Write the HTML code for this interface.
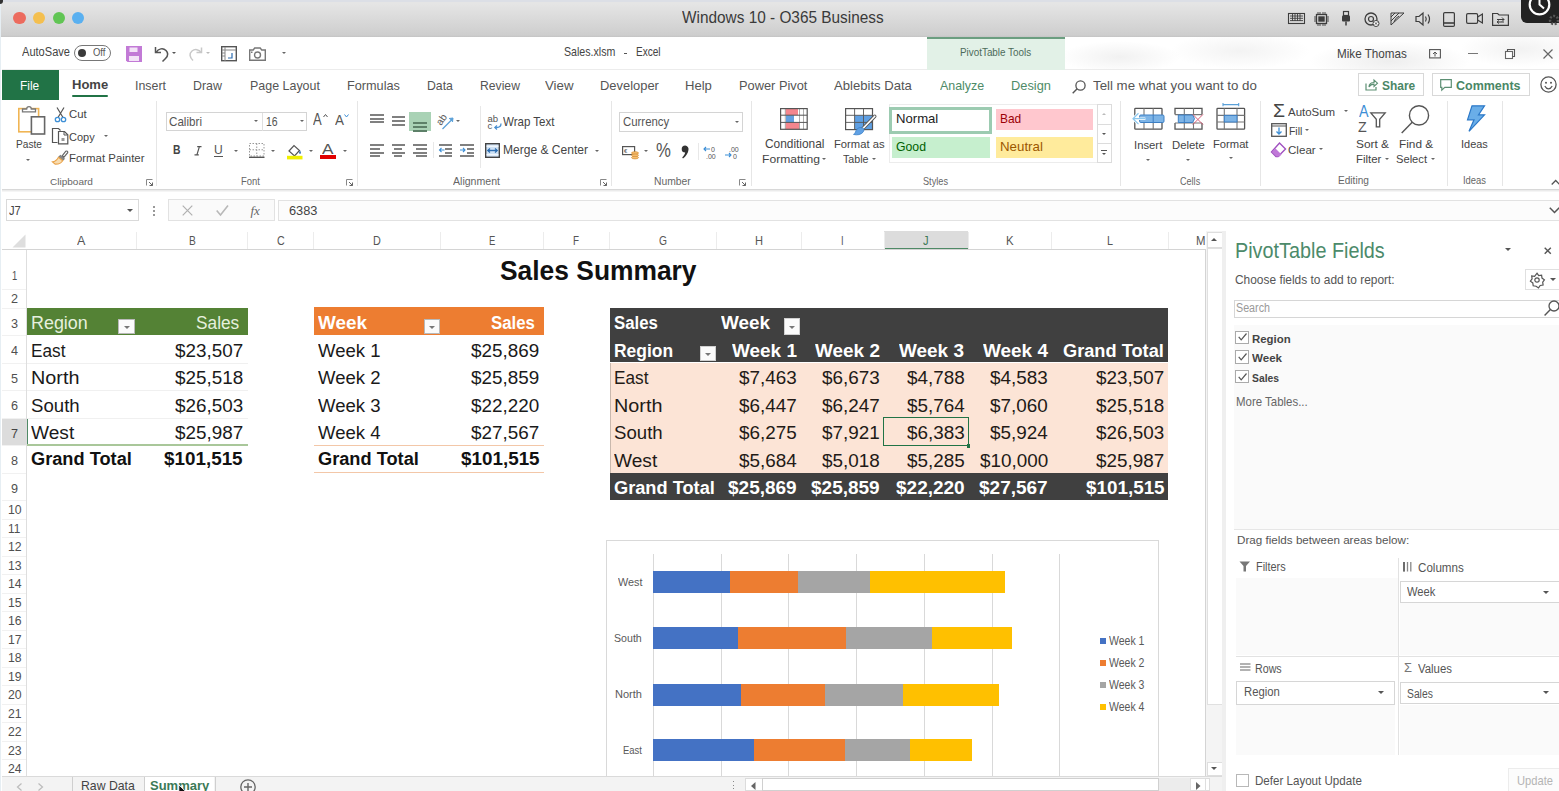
<!DOCTYPE html>
<html><head><meta charset="utf-8"><title>Excel</title>
<style>
html,body{margin:0;padding:0;overflow:hidden;width:1559px;height:791px;}
#root{position:relative;width:1559px;height:791px;overflow:hidden;background:#fff;}
body{width:1559px;height:791px;overflow:hidden;position:relative;background:#fff;font-family:"Liberation Sans",sans-serif;}
.t{position:absolute;white-space:nowrap;line-height:1;transform-origin:0 0;font-family:"Liberation Sans",sans-serif;}
svg{overflow:visible}
</style></head><body><div id="root">
<div style="position:absolute;left:0.0px;top:0.0px;width:1559.0px;height:36.5px;background:linear-gradient(#e5e5e5 10%,#cecece 95%,#c4c4c4);"></div>
<div style="position:absolute;left:0.0px;top:0.0px;width:1559.0px;height:1.5px;background:#dcdfe6;"></div>
<div style="position:absolute;left:0.0px;top:0.0px;width:1.2px;height:791.0px;background:#e6eef3;"></div>
<div style="position:absolute;left:0;top:0;width:3px;height:4px;background:#333;border-radius:0 0 3px 0"></div>
<div style="position:absolute;left:13.3px;top:11.6px;width:12.4px;height:12.4px;border-radius:50%;background:#ec6b5e"></div>
<div style="position:absolute;left:33.0px;top:11.6px;width:12.4px;height:12.4px;border-radius:50%;background:#f4bf4f"></div>
<div style="position:absolute;left:52.5px;top:11.6px;width:12.4px;height:12.4px;border-radius:50%;background:#61c554"></div>
<div style="position:absolute;left:72.0px;top:11.6px;width:12.4px;height:12.4px;border-radius:50%;background:#5ab0f0"></div>
<div class="t" style="left:681.50px;top:9.14px;font-size:16.29px;font-weight:400;color:#3a3a3a;transform:scaleX(0.9443);">Windows 10 - O365 Business</div>
<svg style="position:absolute;left:1288px;top:13px;" width="17" height="11" viewBox="0 0 17 11"><rect x="0.5" y="0.5" width="16" height="10" fill="none" stroke="#3d3d3d" stroke-width="1.1"/><path d="M2 3h13M2 5.3h13M2 7.6h13M4.5 1v7M7 1v7M9.5 1v7M12 1v7" stroke="#3d3d3d" stroke-width="0.9"/></svg>
<svg style="position:absolute;left:1313.5px;top:12px;" width="15" height="14" viewBox="0 0 15 14"><rect x="2.5" y="2.5" width="10" height="9" fill="none" stroke="#3d3d3d" stroke-width="1.3"/><rect x="4.3" y="4.3" width="6.4" height="5.4" fill="#3d3d3d"/><path d="M4 0v2M6 0v2M9 0v2M11 0v2M4 12v2M6 12v2M9 12v2M11 12v2M0 5h2M0 7h2M0 9h2M13 5h2M13 7h2M13 9h2" stroke="#3d3d3d" stroke-width="0.9"/></svg>
<svg style="position:absolute;left:1341px;top:11px;" width="10" height="15" viewBox="0 0 10 15"><rect x="2.5" y="0.5" width="5" height="4" fill="none" stroke="#3d3d3d" stroke-width="1.2"/><rect x="1" y="4.5" width="8" height="6" rx="1" fill="#3d3d3d"/><path d="M5 10.5v4" stroke="#3d3d3d" stroke-width="1.5"/></svg>
<svg style="position:absolute;left:1364px;top:12px;" width="16" height="15" viewBox="0 0 16 15"><circle cx="7" cy="7" r="6" fill="none" stroke="#3d3d3d" stroke-width="1.3"/><circle cx="7" cy="7" r="2.5" fill="none" stroke="#3d3d3d" stroke-width="1.2"/><circle cx="12" cy="11.5" r="3" fill="#fff" stroke="#3d3d3d" stroke-width="1"/><path d="M10.8 10.3l2.4 2.4M13.2 10.3l-2.4 2.4" stroke="#3d3d3d" stroke-width="0.9"/></svg>
<svg style="position:absolute;left:1390px;top:12px;" width="15" height="14" viewBox="0 0 15 14"><path d="M1 1v12M1 1h13M1 13l13-12M1 5l4-4M1 9l8-8M4 10q1-4 5-6" stroke="#3d3d3d" stroke-width="1" fill="none"/></svg>
<svg style="position:absolute;left:1414.5px;top:12px;" width="17" height="14" viewBox="0 0 17 14"><path d="M1 4.5h3l4-3.5v12l-4-3.5h-3z" fill="none" stroke="#3d3d3d" stroke-width="1.2"/><path d="M10.5 4.5q1.5 2.5 0 5M13 2.5q3 4.5 0 9" fill="none" stroke="#3d3d3d" stroke-width="1.2"/></svg>
<svg style="position:absolute;left:1442.5px;top:11.5px;" width="12" height="15" viewBox="0 0 12 15"><rect x="0.6" y="0.6" width="10.8" height="13.8" rx="1.2" fill="none" stroke="#3d3d3d" stroke-width="1.2"/><path d="M1 11h10" stroke="#3d3d3d" stroke-width="1.6"/></svg>
<svg style="position:absolute;left:1466px;top:13px;" width="17" height="11" viewBox="0 0 17 11"><rect x="0.6" y="0.6" width="11" height="9.8" rx="1.3" fill="none" stroke="#3d3d3d" stroke-width="1.2"/><path d="M11.6 4l4.8-3v9l-4.8-3" fill="none" stroke="#3d3d3d" stroke-width="1.2"/></svg>
<svg style="position:absolute;left:1491.5px;top:12px;" width="17" height="14" viewBox="0 0 17 14"><path d="M0.6 1.5h5l1.5 1.5h9.3v10.4h-15.8z" fill="none" stroke="#3d3d3d" stroke-width="1.2"/><path d="M5 7.5h7M10 5.5l2 2-2 2M12 10h-7M7 8.5l-2 1.5 2 1.5" fill="none" stroke="#3d3d3d" stroke-width="1"/></svg>
<div style="position:absolute;left:1520.6px;top:-8px;width:48px;height:31px;border-radius:6px;background:#222"></div>
<svg style="position:absolute;left:1528px;top:-7px;" width="24" height="24" viewBox="0 0 24 24"><circle cx="11.5" cy="11.5" r="9.8" fill="none" stroke="#fff" stroke-width="2.2"/><path d="M11.5 4.5v7l4.5 4" fill="none" stroke="#fff" stroke-width="2"/></svg>
<svg style="position:absolute;left:1546px;top:13px;" width="14" height="13" viewBox="0 0 14 13"><circle cx="8" cy="7" r="4" fill="none" stroke="#555" stroke-width="2.5" stroke-dasharray="2 1.5"/></svg>
<div style="position:absolute;left:1.5px;top:36.5px;width:1557.5px;height:33.0px;background:#ffffff;"></div>
<div style="position:absolute;left:1060px;top:36.5px;width:499px;height:33px;background:radial-gradient(ellipse 60px 16px at 60px 20px,#f1f1f1,transparent),radial-gradient(ellipse 70px 18px at 180px 14px,#f3f3f3,transparent),radial-gradient(ellipse 80px 20px at 330px 24px,#eeeeee,transparent),radial-gradient(ellipse 60px 18px at 460px 12px,#f2f2f2,transparent)"></div>
<div style="position:absolute;left:1.5px;top:69.0px;width:1557.5px;height:1.0px;background:#ececec;"></div>
<div class="t" style="left:22.00px;top:47.28px;font-size:11.86px;font-weight:400;color:#444;transform:scaleX(0.9338);">AutoSave</div>
<div style="position:absolute;box-sizing:border-box;left:74.4px;top:44.5px;width:36.6px;height:16px;border:1.2px solid #777;border-radius:8px;background:#fff"></div>
<div style="position:absolute;left:78.2px;top:48.6px;width:8px;height:8px;border-radius:50%;background:#3a3a3a"></div>
<div class="t" style="left:93.00px;top:47.85px;font-size:10.00px;font-weight:400;color:#555;transform:scaleX(0.9470);">Off</div>
<svg style="position:absolute;left:126px;top:46px;" width="16" height="16" viewBox="0 0 16 16"><path d="M0 0h16v16h-14.5l-1.5-1.5z" fill="#c27ad6"/><rect x="3.5" y="1.5" width="8" height="4.5" fill="#f3e3f7"/><rect x="3" y="10" width="10" height="5" fill="#f3e3f7"/></svg>
<svg style="position:absolute;left:154px;top:45.5px;" width="15" height="16" viewBox="0 0 15 16"><path d="M1.5 1v5.5h5.5" fill="none" stroke="#555" stroke-width="1.5"/><path d="M2 6.5c2.5-4 7-5 10-2 2.5 2.5 2 5.5-.5 8l-3 3" fill="none" stroke="#555" stroke-width="1.5"/></svg>
<div style="position:absolute;left:172.0px;top:51.8px;width:0;height:0;border-left:2.5px solid transparent;border-right:2.5px solid transparent;border-top:2.5px solid #555"></div>
<svg style="position:absolute;left:188px;top:45.5px;" width="15" height="16" viewBox="0 0 15 16"><path d="M13.5 1.5v5h-5" fill="none" stroke="#c8c8c8" stroke-width="1.5"/><path d="M13 6.5c-2-3-6-4-9-1.5-3 2.5-2.5 6 1 9.5" fill="none" stroke="#c8c8c8" stroke-width="1.5"/></svg>
<div style="position:absolute;left:206.0px;top:51.8px;width:0;height:0;border-left:2.5px solid transparent;border-right:2.5px solid transparent;border-top:2.5px solid #bbb"></div>
<svg style="position:absolute;left:221px;top:46px;" width="16" height="15.5" viewBox="0 0 16 15.5"><rect x="0.7" y="0.7" width="14.6" height="14" fill="#fff" stroke="#555" stroke-width="1.4"/><path d="M1 4h14M4 1v14M1 7h3M1 10h3" stroke="#888" stroke-width="1"/><path d="M11 7v5h-4" fill="none" stroke="#2b6cb0" stroke-width="1.2"/></svg>
<svg style="position:absolute;left:248.5px;top:46.5px;" width="17" height="14" viewBox="0 0 17 14"><path d="M0.7 3h3.5l1.5-2h5.5l1.5 2h3.6v10.3h-15.6z" fill="none" stroke="#777" stroke-width="1.4"/><circle cx="8.5" cy="8" r="3" fill="none" stroke="#777" stroke-width="1.4"/><rect x="2" y="4.5" width="1.5" height="1.5" fill="#777"/></svg>
<div style="position:absolute;left:282.1px;top:51.8px;width:0;height:0;border-left:2.5px solid transparent;border-right:2.5px solid transparent;border-top:2.5px solid #666"></div>
<div class="t" style="left:564.10px;top:46.14px;font-size:12.86px;font-weight:400;color:#444;transform:scaleX(0.8268);">Sales.xlsm</div>
<div style="position:absolute;left:623.7px;top:52.6px;width:3.6px;height:1.2px;background:#555;"></div>
<div class="t" style="left:635.50px;top:46.14px;font-size:12.86px;font-weight:400;color:#444;transform:scaleX(0.7825);">Excel</div>
<div style="position:absolute;left:927.0px;top:36.5px;width:137.5px;height:33.0px;background:#e2f1e7;"></div>
<div style="position:absolute;left:927.0px;top:36.5px;width:137.5px;height:2.0px;background:#6b9e80;"></div>
<div class="t" style="left:959.60px;top:47.51px;font-size:10.29px;font-weight:400;color:#4d6b5a;transform:scaleX(0.9601);">PivotTable Tools</div>
<div class="t" style="left:1336.70px;top:47.54px;font-size:12.86px;font-weight:400;color:#444;transform:scaleX(0.9084);">Mike Thomas</div>
<svg style="position:absolute;left:1429px;top:49px;" width="12" height="9.5" viewBox="0 0 12 9.5"><rect x="0.6" y="0.6" width="10.8" height="8.3" fill="none" stroke="#555" stroke-width="1.1"/><path d="M6 7.5v-4.5M4 5l2-2 2 2" fill="none" stroke="#555" stroke-width="1"/></svg>
<div style="position:absolute;left:1468.0px;top:52.7px;width:9.5px;height:1.2px;background:#777;"></div>
<svg style="position:absolute;left:1505px;top:48.5px;" width="10" height="10" viewBox="0 0 10 10"><rect x="0.5" y="2.5" width="7" height="7" fill="#fff" stroke="#666" stroke-width="1.1"/><path d="M2.5 2.5v-2h7v7h-2" fill="none" stroke="#555" stroke-width="1.1"/></svg>
<svg style="position:absolute;left:1542.7px;top:48.5px;" width="10" height="10" viewBox="0 0 10 10"><path d="M0.5 0.5l9 9M9.5 0.5l-9 9" stroke="#666" stroke-width="1.2"/></svg>
<div style="position:absolute;left:1.5px;top:70.0px;width:57.2px;height:29.5px;background:#217346;"></div>
<div class="t" style="left:20.00px;top:78.69px;font-size:13.14px;font-weight:400;color:#fff;transform:scaleX(0.9074);">File</div>
<div class="t" style="left:71.60px;top:79.00px;font-size:12.78px;font-weight:700;color:#444;transform:scaleX(1.0191);">Home</div>
<div style="position:absolute;left:71.6px;top:94.6px;width:36.2px;height:2.4px;background:#217346;border-radius:1px"></div>
<div class="t" style="left:134.50px;top:78.69px;font-size:13.14px;font-weight:400;color:#555;transform:scaleX(0.9435);">Insert</div>
<div class="t" style="left:193.00px;top:78.69px;font-size:13.14px;font-weight:400;color:#555;transform:scaleX(0.9450);">Draw</div>
<div class="t" style="left:249.60px;top:78.69px;font-size:13.14px;font-weight:400;color:#555;transform:scaleX(0.9485);">Page Layout</div>
<div class="t" style="left:347.00px;top:78.69px;font-size:13.14px;font-weight:400;color:#555;transform:scaleX(0.9671);">Formulas</div>
<div class="t" style="left:427.00px;top:78.69px;font-size:13.14px;font-weight:400;color:#555;transform:scaleX(0.9353);">Data</div>
<div class="t" style="left:480.00px;top:78.69px;font-size:13.14px;font-weight:400;color:#555;transform:scaleX(0.9279);">Review</div>
<div class="t" style="left:545.00px;top:78.69px;font-size:13.14px;font-weight:400;color:#555;transform:scaleX(1.0121);">View</div>
<div class="t" style="left:600.00px;top:78.69px;font-size:13.14px;font-weight:400;color:#555;transform:scaleX(0.9845);">Developer</div>
<div class="t" style="left:684.60px;top:78.69px;font-size:13.14px;font-weight:400;color:#555;transform:scaleX(0.9960);">Help</div>
<div class="t" style="left:738.50px;top:78.69px;font-size:13.14px;font-weight:400;color:#555;transform:scaleX(0.9769);">Power Pivot</div>
<div class="t" style="left:834.00px;top:78.69px;font-size:13.14px;font-weight:400;color:#555;transform:scaleX(0.9974);">Ablebits Data</div>
<div class="t" style="left:940.00px;top:78.69px;font-size:13.14px;font-weight:400;color:#4e8b68;transform:scaleX(0.9468);">Analyze</div>
<div class="t" style="left:1011.00px;top:78.69px;font-size:13.14px;font-weight:400;color:#4e8b68;transform:scaleX(0.9770);">Design</div>
<svg style="position:absolute;left:1072px;top:79.5px;" width="14" height="13.5" viewBox="0 0 14 13.5"><circle cx="8.5" cy="5.5" r="4.6" fill="none" stroke="#555" stroke-width="1.3"/><path d="M5.2 8.8l-4.5 4.5" stroke="#555" stroke-width="1.4"/></svg>
<div class="t" style="left:1093.40px;top:78.69px;font-size:13.14px;font-weight:400;color:#555;transform:scaleX(1.0118);">Tell me what you want to do</div>
<div style="position:absolute;box-sizing:border-box;left:1357.6px;top:73.3px;width:66.2px;height:22.5px;border:1px solid #d8d8d8;background:#fff;"></div>
<svg style="position:absolute;left:1365px;top:79px;" width="13" height="12" viewBox="0 0 13 12"><path d="M1 4.5v6.5h10v-3" fill="none" stroke="#5c8f73" stroke-width="1.2"/><path d="M4 8c0-3 2-4.5 5-4.5v-2.5l3.5 3.2-3.5 3.2v-2.3c-2 0-4 1-5 2.9z" fill="none" stroke="#5c8f73" stroke-width="1.1"/></svg>
<div class="t" style="left:1381.70px;top:78.57px;font-size:13.06px;font-weight:700;color:#4a8766;transform:scaleX(0.9147);">Share</div>
<div style="position:absolute;box-sizing:border-box;left:1432.0px;top:73.3px;width:97.6px;height:22.5px;border:1px solid #d8d8d8;background:#fff;"></div>
<svg style="position:absolute;left:1440.4px;top:79px;" width="12" height="12" viewBox="0 0 12 12"><path d="M0.7 0.7h10.6v7.6h-6.5l-3 2.8v-2.8h-1.1z" fill="none" stroke="#5c8f73" stroke-width="1.2"/></svg>
<div class="t" style="left:1455.60px;top:78.57px;font-size:13.06px;font-weight:700;color:#4a8766;transform:scaleX(0.9571);">Comments</div>
<svg style="position:absolute;left:1539.8px;top:76px;" width="17" height="17" viewBox="0 0 17 17"><circle cx="8.5" cy="8.5" r="7.6" fill="none" stroke="#555" stroke-width="1.3"/><circle cx="6" cy="6.8" r="1" fill="#555"/><circle cx="11" cy="6.8" r="1" fill="#555"/><path d="M4.8 10c1 2 2.2 2.8 3.7 2.8s2.7-.8 3.7-2.8" fill="none" stroke="#555" stroke-width="1.2"/></svg>
<div style="position:absolute;left:156.4px;top:101.0px;width:1.0px;height:85.0px;background:#e6e6e6;"></div>
<div style="position:absolute;left:357.0px;top:101.0px;width:1.0px;height:85.0px;background:#e6e6e6;"></div>
<div style="position:absolute;left:610.8px;top:101.0px;width:1.0px;height:85.0px;background:#e6e6e6;"></div>
<div style="position:absolute;left:750.5px;top:101.0px;width:1.0px;height:85.0px;background:#e6e6e6;"></div>
<div style="position:absolute;left:1119.6px;top:101.0px;width:1.0px;height:85.0px;background:#e6e6e6;"></div>
<div style="position:absolute;left:1260.3px;top:101.0px;width:1.0px;height:85.0px;background:#e6e6e6;"></div>
<div style="position:absolute;left:1446.8px;top:101.0px;width:1.0px;height:85.0px;background:#e6e6e6;"></div>
<div style="position:absolute;left:1501.8px;top:101.0px;width:1.0px;height:85.0px;background:#e6e6e6;"></div>
<div style="position:absolute;left:1.5px;top:188.5px;width:1557.5px;height:1.0px;background:#d8d8d8;"></div>
<div style="position:absolute;left:1.5px;top:189.5px;width:1557.5px;height:2.5px;background:linear-gradient(#e6e6e6,#fafafa);"></div>
<svg style="position:absolute;left:17.8px;top:105.4px;" width="28" height="30" viewBox="0 0 28 30"><rect x="0.8" y="3.6" width="19.8" height="23.2" fill="#fff" stroke="#f0b554" stroke-width="1.6"/><path d="M4.5 6.8v-2.8h4.2a2.3 2.3 0 0 1 4.6 0h4.2v2.8z" fill="#fff" stroke="#777" stroke-width="1.3"/><rect x="13.4" y="11.8" width="13.2" height="17.2" fill="#fff" stroke="#666" stroke-width="1.6"/></svg>
<div class="t" style="left:15.70px;top:139.36px;font-size:11.29px;font-weight:400;color:#444;transform:scaleX(0.9017);">Paste</div>
<div style="position:absolute;left:26.3px;top:158.8px;width:0;height:0;border-left:2.5px solid transparent;border-right:2.5px solid transparent;border-top:2.5px solid #666"></div>
<svg style="position:absolute;left:54.6px;top:107px;" width="11" height="15.5" viewBox="0 0 11 15.5"><path d="M2 0.5l6 10M9 0.5l-6 10" stroke="#555" stroke-width="1.2"/><circle cx="2.5" cy="12.5" r="2.2" fill="none" stroke="#3d8fd6" stroke-width="1.3"/><circle cx="8.5" cy="12.5" r="2.2" fill="none" stroke="#3d8fd6" stroke-width="1.3"/></svg>
<div class="t" style="left:69.30px;top:109.24px;font-size:11.43px;font-weight:400;color:#444;transform:scaleX(0.9960);">Cut</div>
<svg style="position:absolute;left:51.5px;top:128px;" width="16.5" height="16.5" viewBox="0 0 16.5 16.5"><path d="M5.5 14.5h-5v-14h6l2 2" fill="none" stroke="#555" stroke-width="1.2"/><path d="M6.5 3.5h6l3.3 3.3v9h-9.3z" fill="#fff" stroke="#555" stroke-width="1.2"/><path d="M12 4v3h3.5" fill="none" stroke="#555" stroke-width="1"/><rect x="9.5" y="10" width="3" height="3" fill="#999"/></svg>
<div class="t" style="left:69.30px;top:132.07px;font-size:10.57px;font-weight:400;color:#444;transform:scaleX(1.0411);">Copy</div>
<div style="position:absolute;left:103.7px;top:134.8px;width:0;height:0;border-left:2.3px solid transparent;border-right:2.3px solid transparent;border-top:2.3px solid #666"></div>
<svg style="position:absolute;left:52px;top:150px;" width="16" height="14.5" viewBox="0 0 16 14.5"><path d="M10.2 5.8l3.6-4.6a1.3 1.3 0 0 1 1.9 1.5l-3.9 4.6z" fill="#fff" stroke="#666" stroke-width="1.2"/><path d="M8.3 5.2l4.2 3.5-1.8 2-4.2-3.4z" fill="#888" stroke="#666" stroke-width="0.8"/><path d="M6.5 7.3l4.2 3.4c-1.5 2.3-4 3.6-7.5 3.4l-2.7-2.2c2.4-.3 4.6-2.1 6-4.6z" fill="#f8dcb0" stroke="#e9a34a" stroke-width="1.1"/></svg>
<div class="t" style="left:69.30px;top:152.74px;font-size:11.43px;font-weight:400;color:#444;transform:scaleX(0.9987);">Format Painter</div>
<div class="t" style="left:49.70px;top:177.03px;font-size:9.43px;font-weight:400;color:#666;transform:scaleX(1.0631);">Clipboard</div>
<svg style="position:absolute;left:146px;top:179px;" width="7.5" height="7" viewBox="0 0 7.5 7"><path d="M0.5 6.5v-6h6" fill="none" stroke="#888" stroke-width="1"/><path d="M3 3l3.5 3.5M6.5 3.5v3h-3" fill="none" stroke="#666" stroke-width="1"/></svg>
<div style="position:absolute;box-sizing:border-box;left:165.5px;top:112.1px;width:141.7px;height:19.3px;border:1px solid #d4d4d4;background:#fff;"></div>
<div style="position:absolute;left:261.5px;top:113.0px;width:1.0px;height:17.5px;background:#e0e0e0;"></div>
<div class="t" style="left:168.50px;top:116.38px;font-size:12.57px;font-weight:400;color:#555;transform:scaleX(0.9259);">Calibri</div>
<div style="position:absolute;left:254.4px;top:120.4px;width:0;height:0;border-left:2.3px solid transparent;border-right:2.3px solid transparent;border-top:2.3px solid #666"></div>
<div class="t" style="left:266.00px;top:116.38px;font-size:12.57px;font-weight:400;color:#555;transform:scaleX(0.8313);">16</div>
<div style="position:absolute;left:299.6px;top:120.4px;width:0;height:0;border-left:2.3px solid transparent;border-right:2.3px solid transparent;border-top:2.3px solid #666"></div>
<div class="t" style="left:313.30px;top:112.20px;font-size:15.86px;font-weight:400;color:#555;transform:scaleX(0.8189);">A</div>
<svg style="position:absolute;left:322.5px;top:113.5px;" width="5" height="3.5" viewBox="0 0 5 3.5"><path d="M0.5 3l2-2.5 2 2.5" fill="none" stroke="#555" stroke-width="1"/></svg>
<div class="t" style="left:335.00px;top:114.01px;font-size:13.71px;font-weight:400;color:#555;transform:scaleX(0.9795);">A</div>
<svg style="position:absolute;left:343.5px;top:114px;" width="5" height="3.5" viewBox="0 0 5 3.5"><path d="M0.5 0.5l2 2.5 2-2.5" fill="none" stroke="#3d8fd6" stroke-width="1"/></svg>
<div class="t" style="left:172.50px;top:143.98px;font-size:12.57px;font-weight:700;color:#444;transform:scaleX(0.8286);">B</div>
<svg style="position:absolute;left:193.5px;top:145.5px;" width="8" height="9.5" viewBox="0 0 8 9.5"><path d="M3.2 0.6h4.3M0.5 8.9h4.3M5.4 0.6l-2.5 8.3" fill="none" stroke="#555" stroke-width="1.2"/></svg>
<div class="t" style="left:214.30px;top:143.98px;font-size:12.57px;font-weight:400;color:#555;transform:scaleX(0.9612);">U</div>
<div style="position:absolute;left:214.3px;top:156.0px;width:8.7px;height:1.0px;background:#555;"></div>
<div style="position:absolute;left:233.5px;top:149.8px;width:0;height:0;border-left:2.3px solid transparent;border-right:2.3px solid transparent;border-top:2.3px solid #666"></div>
<svg style="position:absolute;left:248.6px;top:143px;" width="15.5" height="15" viewBox="0 0 15.5 15"><rect x="0.5" y="0.5" width="14.5" height="12.5" fill="none" stroke="#999" stroke-width="1" stroke-dasharray="1.5 1.5"/><path d="M7.75 0.5v12.5M0.5 6.75h14.5" stroke="#999" stroke-width="1" stroke-dasharray="1.5 1.5"/><path d="M0 14.3h15.5" stroke="#555" stroke-width="1.4"/></svg>
<div style="position:absolute;left:271.2px;top:149.8px;width:0;height:0;border-left:2.3px solid transparent;border-right:2.3px solid transparent;border-top:2.3px solid #666"></div>
<svg style="position:absolute;left:287px;top:143.5px;" width="16" height="16" viewBox="0 0 16 16"><path d="M2 7l5-5.5 5.5 5-5 5.5z" fill="#fff" stroke="#555" stroke-width="1.2"/><path d="M13 6.5q1.8 2.5 0 3.5q-1.8-1 0-3.5z" fill="#2b6cb0"/><rect x="0" y="11.8" width="15.5" height="3.6" fill="#f0f000"/></svg>
<div style="position:absolute;left:308.7px;top:149.8px;width:0;height:0;border-left:2.3px solid transparent;border-right:2.3px solid transparent;border-top:2.3px solid #666"></div>
<div class="t" style="left:322.00px;top:141.32px;font-size:15.00px;font-weight:400;color:#555;transform:scaleX(1.1443);">A</div>
<div style="position:absolute;left:320.0px;top:155.3px;width:15.5px;height:3.6px;background:#e00000;"></div>
<div style="position:absolute;left:342.7px;top:149.8px;width:0;height:0;border-left:2.3px solid transparent;border-right:2.3px solid transparent;border-top:2.3px solid #666"></div>
<div class="t" style="left:240.50px;top:177.15px;font-size:10.00px;font-weight:400;color:#666;transform:scaleX(0.9450);">Font</div>
<svg style="position:absolute;left:346.3px;top:179px;" width="7.5" height="7" viewBox="0 0 7.5 7"><path d="M0.5 6.5v-6h6" fill="none" stroke="#888" stroke-width="1"/><path d="M3 3l3.5 3.5M6.5 3.5v3h-3" fill="none" stroke="#666" stroke-width="1"/></svg>
<div style="position:absolute;left:370.0px;top:114.0px;width:14.0px;height:2.0px;background:#808080;"></div>
<div style="position:absolute;left:370.0px;top:118.0px;width:14.0px;height:2.0px;background:#808080;"></div>
<div style="position:absolute;left:370.0px;top:121.0px;width:14.0px;height:2.0px;background:#808080;"></div>
<div style="position:absolute;left:392.0px;top:116.0px;width:13.0px;height:2.0px;background:#808080;"></div>
<div style="position:absolute;left:392.0px;top:120.0px;width:13.0px;height:2.0px;background:#808080;"></div>
<div style="position:absolute;left:392.0px;top:124.0px;width:13.0px;height:2.0px;background:#808080;"></div>
<div style="position:absolute;left:409.0px;top:112.0px;width:21.8px;height:19.3px;background:#a9d2b5;"></div>
<div style="position:absolute;left:413.0px;top:122.0px;width:14.0px;height:2.0px;background:#5d8068;"></div>
<div style="position:absolute;left:413.0px;top:126.0px;width:14.0px;height:2.0px;background:#5d8068;"></div>
<div style="position:absolute;left:413.0px;top:130.0px;width:14.0px;height:2.0px;background:#5d8068;"></div>
<svg style="position:absolute;left:437.5px;top:112px;" width="18" height="18" viewBox="0 0 18 18"><text x="0" y="0" font-size="10" font-family="Liberation Sans" fill="#555" transform="translate(3 14) rotate(-55)">ab</text><path d="M4.5 17l10-10" stroke="#5aa0d8" stroke-width="1.2"/><path d="M11 6.5l4-.5-.5 4" fill="#5aa0d8" stroke="#5aa0d8" stroke-width="1"/></svg>
<div style="position:absolute;left:456.2px;top:119.8px;width:0;height:0;border-left:2.3px solid transparent;border-right:2.3px solid transparent;border-top:2.3px solid #666"></div>
<div style="position:absolute;left:370.0px;top:144.0px;width:14.0px;height:2.0px;background:#808080;"></div>
<div style="position:absolute;left:370.0px;top:148.0px;width:10.0px;height:2.0px;background:#808080;"></div>
<div style="position:absolute;left:370.0px;top:152.0px;width:14.0px;height:2.0px;background:#808080;"></div>
<div style="position:absolute;left:370.0px;top:155.0px;width:10.0px;height:2.0px;background:#808080;"></div>
<div style="position:absolute;left:392.0px;top:144.0px;width:13.0px;height:2.0px;background:#808080;"></div>
<div style="position:absolute;left:394.0px;top:148.0px;width:8.0px;height:2.0px;background:#808080;"></div>
<div style="position:absolute;left:392.0px;top:152.0px;width:13.0px;height:2.0px;background:#808080;"></div>
<div style="position:absolute;left:394.0px;top:155.0px;width:8.0px;height:2.0px;background:#808080;"></div>
<div style="position:absolute;left:413.0px;top:144.0px;width:14.0px;height:2.0px;background:#808080;"></div>
<div style="position:absolute;left:416.0px;top:148.0px;width:11.0px;height:2.0px;background:#808080;"></div>
<div style="position:absolute;left:413.0px;top:152.0px;width:14.0px;height:2.0px;background:#808080;"></div>
<div style="position:absolute;left:416.0px;top:155.0px;width:11.0px;height:2.0px;background:#808080;"></div>
<div style="position:absolute;left:433.0px;top:142.0px;width:1.0px;height:16.0px;background:#e8e8e8;"></div>
<div style="position:absolute;left:439.0px;top:144.0px;width:13.0px;height:2.0px;background:#808080;"></div>
<div style="position:absolute;left:445.0px;top:148.0px;width:7.0px;height:2.0px;background:#808080;"></div>
<div style="position:absolute;left:445.0px;top:152.0px;width:7.0px;height:2.0px;background:#808080;"></div>
<div style="position:absolute;left:439.0px;top:155.0px;width:13.0px;height:2.0px;background:#808080;"></div>
<svg style="position:absolute;left:438.5px;top:146.5px;" width="6" height="6" viewBox="0 0 6 6"><path d="M0.5 3h5M2.5 1l-2 2 2 2" fill="none" stroke="#3d8fd6" stroke-width="1.1"/></svg>
<div style="position:absolute;left:460.0px;top:144.0px;width:14.0px;height:2.0px;background:#808080;"></div>
<div style="position:absolute;left:467.0px;top:148.0px;width:7.0px;height:2.0px;background:#808080;"></div>
<div style="position:absolute;left:467.0px;top:152.0px;width:7.0px;height:2.0px;background:#808080;"></div>
<div style="position:absolute;left:460.0px;top:155.0px;width:14.0px;height:2.0px;background:#808080;"></div>
<svg style="position:absolute;left:460.3px;top:146.5px;" width="6" height="6" viewBox="0 0 6 6"><path d="M0 3h5M3 1l2 2-2 2" fill="none" stroke="#3d8fd6" stroke-width="1.1"/></svg>
<div style="position:absolute;left:480.0px;top:106.0px;width:1.0px;height:62.0px;background:#e8e8e8;"></div>
<svg style="position:absolute;left:487.5px;top:113.5px;" width="14" height="16" viewBox="0 0 14 16"><text x="-0.5" y="7.5" font-size="9.5" font-family="Liberation Sans" fill="#555">ab</text><text x="-0.5" y="15" font-size="9.5" font-family="Liberation Sans" fill="#555">c</text><path d="M13 9.5c0 2.5-1.5 4-4.5 4h-1.5" fill="none" stroke="#4a90d0" stroke-width="1.3"/><path d="M9 11.5l-2.2 2 2.2 2" fill="none" stroke="#4a90d0" stroke-width="1.2"/></svg>
<div class="t" style="left:502.50px;top:115.84px;font-size:12.86px;font-weight:400;color:#444;transform:scaleX(0.8971);">Wrap Text</div>
<svg style="position:absolute;left:485px;top:142.7px;" width="15" height="15" viewBox="0 0 15 15"><rect x="0.7" y="0.7" width="13.6" height="13.6" fill="#cfe2f5" stroke="#444" stroke-width="1.4"/><path d="M1.5 3.2h12M1.5 11.8h12" stroke="#fff" stroke-width="1"/><path d="M3 7.5h9" stroke="#2b6cb0" stroke-width="1.4"/><path d="M5 5.5l-2.2 2 2.2 2M10 5.5l2.2 2-2.2 2" fill="none" stroke="#2b6cb0" stroke-width="1.3"/></svg>
<div class="t" style="left:502.50px;top:145.48px;font-size:11.86px;font-weight:400;color:#444;transform:scaleX(1.0154);">Merge &amp; Center</div>
<div style="position:absolute;left:595.2px;top:149.8px;width:0;height:0;border-left:2.3px solid transparent;border-right:2.3px solid transparent;border-top:2.3px solid #666"></div>
<div class="t" style="left:453.00px;top:176.08px;font-size:11.14px;font-weight:400;color:#666;transform:scaleX(0.9489);">Alignment</div>
<svg style="position:absolute;left:600px;top:179px;" width="7.5" height="7" viewBox="0 0 7.5 7"><path d="M0.5 6.5v-6h6" fill="none" stroke="#888" stroke-width="1"/><path d="M3 3l3.5 3.5M6.5 3.5v3h-3" fill="none" stroke="#666" stroke-width="1"/></svg>
<div style="position:absolute;box-sizing:border-box;left:619.0px;top:112.0px;width:124.0px;height:19.8px;border:1px solid #d4d4d4;background:#fff;"></div>
<div class="t" style="left:622.60px;top:116.14px;font-size:12.86px;font-weight:400;color:#555;transform:scaleX(0.8861);">Currency</div>
<div style="position:absolute;left:735.2px;top:120.8px;width:0;height:0;border-left:2.3px solid transparent;border-right:2.3px solid transparent;border-top:2.3px solid #666"></div>
<svg style="position:absolute;left:621.5px;top:145.5px;" width="17" height="13" viewBox="0 0 17 13"><rect x="0.6" y="0.6" width="12" height="8" fill="#fff" stroke="#555" stroke-width="1.2"/><text x="2" y="7" font-size="6" font-family="Liberation Sans" fill="#555">€</text><ellipse cx="13" cy="7" rx="3.5" ry="1.3" fill="#f3c178" stroke="#d98a2b" stroke-width="0.7"/><ellipse cx="13" cy="9.3" rx="3.5" ry="1.3" fill="#f3c178" stroke="#d98a2b" stroke-width="0.7"/><ellipse cx="13" cy="11.6" rx="3.5" ry="1.3" fill="#f3c178" stroke="#d98a2b" stroke-width="0.7"/></svg>
<div style="position:absolute;left:644.4px;top:150.2px;width:0;height:0;border-left:2.3px solid transparent;border-right:2.3px solid transparent;border-top:2.3px solid #666"></div>
<div class="t" style="left:655.60px;top:141.46px;font-size:19.57px;font-weight:400;color:#555;transform:scaleX(0.8554);">%</div>
<svg style="position:absolute;left:681.3px;top:144.5px;" width="8" height="14" viewBox="0 0 8 14"><path d="M4.3 0.5a3.6 3.6 0 0 1 3.2 4.2c-.3 3.5-2.5 6.5-5.5 8.8l-.8-.9c1.6-1.5 2.7-3.3 3-5a3.3 3.3 0 1 1 .1-7.1z" fill="#333"/></svg>
<div style="position:absolute;left:697.5px;top:143.0px;width:1.0px;height:17.0px;background:#e8e8e8;"></div>
<svg style="position:absolute;left:703px;top:144.5px;" width="16" height="14" viewBox="0 0 16 14"><path d="M1 4h6M3 2l-2 2 2 2" fill="none" stroke="#3d8fd6" stroke-width="1.1"/><text x="8" y="7" font-size="7" font-family="Liberation Sans" fill="#555">0</text><text x="3" y="13.5" font-size="7" font-family="Liberation Sans" fill="#555">.00</text></svg>
<svg style="position:absolute;left:723.5px;top:144.5px;" width="16" height="14" viewBox="0 0 16 14"><text x="5" y="6.5" font-size="7" font-family="Liberation Sans" fill="#555">.00</text><path d="M1 10h6M5 8l2 2-2 2" fill="none" stroke="#3d8fd6" stroke-width="1.1"/><text x="9" y="13.5" font-size="7" font-family="Liberation Sans" fill="#555">0</text></svg>
<div class="t" style="left:654.40px;top:176.31px;font-size:11.00px;font-weight:400;color:#666;transform:scaleX(0.9411);">Number</div>
<svg style="position:absolute;left:739.3px;top:179px;" width="7.5" height="7" viewBox="0 0 7.5 7"><path d="M0.5 6.5v-6h6" fill="none" stroke="#888" stroke-width="1"/><path d="M3 3l3.5 3.5M6.5 3.5v3h-3" fill="none" stroke="#666" stroke-width="1"/></svg>
<svg style="position:absolute;left:780px;top:108px;" width="28" height="22" viewBox="0 0 28 22"><rect x="0.6" y="0.6" width="26.6" height="20.7" fill="#fff"/><rect x="5.5" y="0.6" width="12.5" height="6.6" fill="#f4868e"/><rect x="5.5" y="14.4" width="14" height="6.9" fill="#f4868e"/><rect x="6" y="7.2" width="8" height="7.2" fill="#62a0e0"/><path d="M5.3 0.6v20.7M19.5 0.6v20.7M23.5 0.6v20.7" stroke="#999" stroke-width="0.8"/><path d="M0.6 7.2h26.6M0.6 14.4h26.6" stroke="#555" stroke-width="1"/><rect x="0.6" y="0.6" width="26.6" height="20.7" fill="none" stroke="#555" stroke-width="1.2"/></svg>
<div class="t" style="left:764.50px;top:137.92px;font-size:12.29px;font-weight:400;color:#444;transform:scaleX(0.9676);">Conditional</div>
<div class="t" style="left:761.60px;top:154.21px;font-size:11.00px;font-weight:400;color:#444;transform:scaleX(1.1012);">Formatting</div>
<div style="position:absolute;left:822.1px;top:158.3px;width:0;height:0;border-left:2.3px solid transparent;border-right:2.3px solid transparent;border-top:2.3px solid #666"></div>
<svg style="position:absolute;left:844.7px;top:108px;" width="31" height="27" viewBox="0 0 31 27"><rect x="0.6" y="0.6" width="26.9" height="21" fill="#fff"/><rect x="9.6" y="7.3" width="17.9" height="14.3" fill="#5fa0e4"/><path d="M9.6 0.6v21M18.5 0.6v21M0.6 7.3h26.9M0.6 14.4h26.9" stroke="#555" stroke-width="0.9"/><rect x="0.6" y="0.6" width="26.9" height="21" fill="none" stroke="#555" stroke-width="1.2"/><path d="M29.8 8.2l-13 13.4" stroke="#555" stroke-width="3.4" stroke-linecap="round"/><path d="M29.8 8.2l-13 13.4" stroke="#fff" stroke-width="1.6" stroke-linecap="round"/><path d="M15 19.5c-2.5.5-4 2.5-4.5 4.5-.3 1.2-1 2-2 2.4 3.5 1 7.5.3 9.5-2.2 1-1.3 1.2-2.8.5-3.8z" fill="#5fa0e4" stroke="#3b82c8" stroke-width="0.8"/></svg>
<div class="t" style="left:833.80px;top:139.10px;font-size:11.00px;font-weight:400;color:#444;transform:scaleX(1.0202);">Format as</div>
<div class="t" style="left:842.50px;top:154.23px;font-size:10.86px;font-weight:400;color:#444;transform:scaleX(0.9827);">Table</div>
<div style="position:absolute;left:871.7px;top:158.3px;width:0;height:0;border-left:2.3px solid transparent;border-right:2.3px solid transparent;border-top:2.3px solid #666"></div>
<div style="position:absolute;box-sizing:border-box;left:888.7px;top:103.8px;width:223.3px;height:59.6px;border:1px solid #ececec;background:#fff;"></div>
<div style="position:absolute;box-sizing:border-box;left:889.3px;top:106.7px;width:102.7px;height:26.9px;border:3px solid #9ccbb1;background:#fff;"></div>
<div class="t" style="left:896.40px;top:113.14px;font-size:12.86px;font-weight:400;color:#222;transform:scaleX(1.0202);">Normal</div>
<div style="position:absolute;left:995.5px;top:109.0px;width:97.5px;height:21.3px;background:#ffc7ce;"></div>
<div class="t" style="left:999.60px;top:113.14px;font-size:12.86px;font-weight:400;color:#9c0006;transform:scaleX(0.9263);">Bad</div>
<div style="position:absolute;left:892.0px;top:136.5px;width:97.7px;height:21.1px;background:#c6efce;"></div>
<div class="t" style="left:895.80px;top:139.92px;font-size:13.00px;font-weight:400;color:#006100;transform:scaleX(0.9438);">Good</div>
<div style="position:absolute;left:995.5px;top:136.5px;width:97.5px;height:21.1px;background:#ffeb9c;"></div>
<div class="t" style="left:999.60px;top:139.92px;font-size:13.00px;font-weight:400;color:#9c5700;transform:scaleX(1.0233);">Neutral</div>
<div style="position:absolute;box-sizing:border-box;left:1096.5px;top:104.0px;width:15.0px;height:59.4px;border:1px solid #dcdcdc;background:#fff;"></div>
<div style="position:absolute;left:1096.5px;top:124.0px;width:15.0px;height:1.0px;background:#dcdcdc;"></div>
<div style="position:absolute;left:1096.5px;top:143.0px;width:15.0px;height:1.0px;background:#dcdcdc;"></div>
<div style="position:absolute;left:1101.7px;top:112.8px;width:0;height:0;border-left:2.3px solid transparent;border-right:2.3px solid transparent;border-bottom:2.3px solid #bbb"></div>
<div style="position:absolute;left:1101.5px;top:132.6px;width:0;height:0;border-left:2.5px solid transparent;border-right:2.5px solid transparent;border-top:2.5px solid #555"></div>
<div style="position:absolute;left:1101.0px;top:150.0px;width:6.0px;height:1.0px;background:#555;"></div>
<div style="position:absolute;left:1101.5px;top:152.8px;width:0;height:0;border-left:2.5px solid transparent;border-right:2.5px solid transparent;border-top:2.5px solid #555"></div>
<div class="t" style="left:922.70px;top:176.45px;font-size:10.71px;font-weight:400;color:#666;transform:scaleX(0.8563);">Styles</div>
<svg style="position:absolute;left:1125px;top:100px;" width="130" height="35" viewBox="0 0 130 35"><rect x="9.8" y="8.3" width="27.2" height="20.9" rx="0.8" fill="#fff" stroke="#555" stroke-width="1.3"/><path d="M19 8.3v20.9M28.2 8.3v20.9" stroke="#777" stroke-width="1.1"/><rect x="14.6" y="15" width="24.4" height="7.5" rx="1.2" fill="#7db4e6" stroke="#3d7fc4" stroke-width="1"/><path d="M28.2 15v7.5" stroke="#3d7fc4" stroke-width="1"/><path d="M20.4 18.7h-11.5M13.5 13.3l-5.5 5.4 5.5 5.4" fill="none" stroke="#fff" stroke-width="2.6"/><path d="M20.4 18.7h-11.5M13.5 13.3l-5.5 5.4 5.5 5.4" fill="none" stroke="#8cc8ee" stroke-width="1.2"/><path d="M50 14.6v-6.3h27v6.3M50 23v6.2h27v-6.2" fill="#fff" stroke="#555" stroke-width="1.3"/><path d="M59.3 8.3v6.5M68.5 8.3v6.5M59.3 22.7v6.5M68.5 22.7v6.5M50 14.6h27M50 23h27" stroke="#777" stroke-width="1.1"/><path d="M53.3 15h14.4l1.8 3.7-1.8 3.8h-14.4z" fill="#7db4e6" stroke="#3d7fc4" stroke-width="1"/><path d="M59.3 15v7.5" stroke="#3d7fc4" stroke-width="1"/><path d="M67.8 14.4l10.2 10.2M78 14.4l-10.2 10.2" stroke="#d8607a" stroke-width="1"/><path d="M98 4.6h15.7M98 3v3.2M113.7 3v3.2" stroke="#5aa0d8" stroke-width="1.1"/><rect x="92" y="8.3" width="27.6" height="20.9" rx="0.8" fill="#fff" stroke="#555" stroke-width="1.3"/><path d="M99.3 8.3v20.9M112 8.3v20.9M92 15.4h27.6M92 22h27.6" stroke="#777" stroke-width="1.1"/><rect x="99.3" y="15.4" width="12.7" height="6.6" fill="#7db4e6" stroke="#3d7fc4" stroke-width="1"/></svg>
<div class="t" style="left:1134.20px;top:139.88px;font-size:11.14px;font-weight:400;color:#444;transform:scaleX(1.0159);">Insert</div>
<div style="position:absolute;left:1146.3px;top:158.8px;width:0;height:0;border-left:2.3px solid transparent;border-right:2.3px solid transparent;border-top:2.3px solid #666"></div>
<div class="t" style="left:1172.20px;top:139.88px;font-size:11.14px;font-weight:400;color:#444;transform:scaleX(1.0185);">Delete</div>
<div style="position:absolute;left:1186.4px;top:158.8px;width:0;height:0;border-left:2.3px solid transparent;border-right:2.3px solid transparent;border-top:2.3px solid #666"></div>
<div class="t" style="left:1213.00px;top:138.95px;font-size:10.71px;font-weight:400;color:#444;transform:scaleX(1.0469);">Format</div>
<div style="position:absolute;left:1228.5px;top:157.3px;width:0;height:0;border-left:2.3px solid transparent;border-right:2.3px solid transparent;border-top:2.3px solid #666"></div>
<div class="t" style="left:1179.60px;top:176.07px;font-size:10.57px;font-weight:400;color:#666;transform:scaleX(0.8588);">Cells</div>
<div class="t" style="left:1272.50px;top:101.93px;font-size:18.43px;font-weight:400;color:#444;transform:scaleX(1.0590);">Σ</div>
<div class="t" style="left:1288.30px;top:107.07px;font-size:10.57px;font-weight:400;color:#444;transform:scaleX(1.0850);">AutoSum</div>
<div style="position:absolute;left:1344.2px;top:110.3px;width:0;height:0;border-left:2.3px solid transparent;border-right:2.3px solid transparent;border-top:2.3px solid #666"></div>
<svg style="position:absolute;left:1270.6px;top:123.4px;" width="16" height="14" viewBox="0 0 16 14"><rect x="0.7" y="0.7" width="14.6" height="12.6" fill="#fff" stroke="#555" stroke-width="1.3"/><path d="M1 3h14" stroke="#555" stroke-width="1"/><path d="M8 4.5v6.5M5.5 8.5l2.5 2.5 2.5-2.5" fill="none" stroke="#3d8fd6" stroke-width="1.3"/></svg>
<div class="t" style="left:1288.70px;top:125.73px;font-size:10.86px;font-weight:400;color:#444;transform:scaleX(0.9608);">Fill</div>
<div style="position:absolute;left:1305.2px;top:129.3px;width:0;height:0;border-left:2.3px solid transparent;border-right:2.3px solid transparent;border-top:2.3px solid #666"></div>
<svg style="position:absolute;left:1271px;top:142px;" width="15.5" height="14.5" viewBox="0 0 15.5 14.5"><path d="M8.5 1l6 6-7.5 7.5h-2l-4.5-4.5z" fill="#fff" stroke="#a050c0" stroke-width="1.4"/><path d="M1 10l3.5-3.5 6 6-2 2h-3z" fill="#c078d8"/></svg>
<div class="t" style="left:1288.30px;top:144.63px;font-size:10.86px;font-weight:400;color:#444;transform:scaleX(1.0675);">Clear</div>
<div style="position:absolute;left:1318.7px;top:148.3px;width:0;height:0;border-left:2.3px solid transparent;border-right:2.3px solid transparent;border-top:2.3px solid #666"></div>
<div class="t" style="left:1358.60px;top:104.24px;font-size:15.57px;font-weight:400;color:#3d8fd6;transform:scaleX(0.9202);">A</div>
<div class="t" style="left:1358.00px;top:118.58px;font-size:15.29px;font-weight:400;color:#555;transform:scaleX(0.9330);">Z</div>
<svg style="position:absolute;left:1370px;top:112px;" width="16" height="15.5" viewBox="0 0 16 15.5"><path d="M0.8 0.8h14.4l-5.5 6.5v7.5h-3.4v-7.5z" fill="none" stroke="#555" stroke-width="1.3"/></svg>
<svg style="position:absolute;left:1401px;top:105px;" width="30" height="29" viewBox="0 0 30 29"><circle cx="18" cy="10.4" r="9.6" fill="none" stroke="#555" stroke-width="1.4"/><path d="M11.2 17.2l-10.5 10.8" stroke="#555" stroke-width="1.4"/></svg>
<div class="t" style="left:1355.70px;top:139.07px;font-size:10.57px;font-weight:400;color:#444;transform:scaleX(1.1263);">Sort &amp;</div>
<div class="t" style="left:1355.70px;top:154.23px;font-size:10.86px;font-weight:400;color:#444;transform:scaleX(1.0497);">Filter</div>
<div style="position:absolute;left:1384.7px;top:158.3px;width:0;height:0;border-left:2.3px solid transparent;border-right:2.3px solid transparent;border-top:2.3px solid #666"></div>
<div class="t" style="left:1398.80px;top:139.07px;font-size:10.57px;font-weight:400;color:#444;transform:scaleX(1.1194);">Find &amp;</div>
<div class="t" style="left:1396.00px;top:154.23px;font-size:10.86px;font-weight:400;color:#444;transform:scaleX(1.0271);">Select</div>
<div style="position:absolute;left:1431.2px;top:158.3px;width:0;height:0;border-left:2.3px solid transparent;border-right:2.3px solid transparent;border-top:2.3px solid #666"></div>
<div class="t" style="left:1337.60px;top:176.11px;font-size:10.29px;font-weight:400;color:#666;transform:scaleX(0.9818);">Editing</div>
<svg style="position:absolute;left:1463.8px;top:105px;" width="21.5" height="27.5" viewBox="0 0 21.5 27.5"><path d="M8 0.8h12.5l-6 9h6l-15.5 16.5 5-11.5h-6.5z" fill="#6aaee8" stroke="#2b78c8" stroke-width="1.2"/></svg>
<div class="t" style="left:1460.80px;top:139.55px;font-size:10.00px;font-weight:400;color:#444;transform:scaleX(1.0961);">Ideas</div>
<div class="t" style="left:1463.00px;top:176.31px;font-size:10.29px;font-weight:400;color:#666;transform:scaleX(0.9146);">Ideas</div>
<svg style="position:absolute;left:1551px;top:179px;" width="9" height="6" viewBox="0 0 9 6"><path d="M0.7 5.5l4-4 4 4" fill="none" stroke="#555" stroke-width="1.3"/></svg>
<div style="position:absolute;left:1.5px;top:192.0px;width:1557.5px;height:39.0px;background:#ffffff;"></div>
<div style="position:absolute;box-sizing:border-box;left:6.3px;top:199.4px;width:132.4px;height:22.0px;border:1px solid #dadada;background:#fff;"></div>
<div class="t" style="left:8.90px;top:204.47px;font-size:13.29px;font-weight:400;color:#444;transform:scaleX(0.8419);">J7</div>
<div style="position:absolute;left:126.6px;top:209.0px;width:0;height:0;border-left:3px solid transparent;border-right:3px solid transparent;border-top:3px solid #555"></div>
<div style="position:absolute;left:153.0px;top:206.0px;width:1.5px;height:1.5px;background:#999;"></div>
<div style="position:absolute;left:153.0px;top:210.0px;width:1.5px;height:1.5px;background:#999;"></div>
<div style="position:absolute;left:153.0px;top:214.0px;width:1.5px;height:1.5px;background:#999;"></div>
<div style="position:absolute;box-sizing:border-box;left:168.3px;top:199.4px;width:106.5px;height:22.0px;border:1px solid #e2e2e2;background:#fafafa;"></div>
<svg style="position:absolute;left:181.6px;top:204.5px;" width="11" height="11" viewBox="0 0 11 11"><path d="M0.7 0.7l9.6 9.6M10.3 0.7l-9.6 9.6" stroke="#b0b0b0" stroke-width="1.2"/></svg>
<svg style="position:absolute;left:216px;top:204.5px;" width="12.5" height="11" viewBox="0 0 12.5 11"><path d="M0.7 5.5l3.8 4.5 7.5-9.5" fill="none" stroke="#b8b8b8" stroke-width="1.6"/></svg>
<svg style="position:absolute;left:250px;top:203.5px;" width="15" height="14" viewBox="0 0 15 14"><text x="0.5" y="10.5" font-size="13" font-style="italic" font-family="Liberation Serif" fill="#666">fx</text></svg>
<div style="position:absolute;box-sizing:border-box;left:278.4px;top:199.6px;width:1291.6px;height:21.8px;border:1px solid #e2e2e2;background:#fcfcfc;"></div>
<div class="t" style="left:289.00px;top:204.47px;font-size:13.29px;font-weight:400;color:#444;transform:scaleX(0.9641);">6383</div>
<svg style="position:absolute;left:1549px;top:207px;" width="11" height="7" viewBox="0 0 11 7"><path d="M0.8 0.8l4.7 4.7 4.7-4.7" fill="none" stroke="#555" stroke-width="1.5"/></svg>
<div style="position:absolute;left:1.5px;top:231.0px;width:1204.5px;height:18.5px;background:#ffffff;"></div>
<div style="position:absolute;left:884.0px;top:231.4px;width:84.0px;height:18.1px;background:#dcdcdc;"></div>
<div style="position:absolute;left:884.0px;top:247.5px;width:84.0px;height:2.0px;background:#4f8a66;"></div>
<div style="position:absolute;left:1.5px;top:249.0px;width:1204.5px;height:1.0px;background:#d4d4d4;"></div>
<div style="position:absolute;left:136.1px;top:232.0px;width:1.0px;height:17.0px;background:#ececec;"></div>
<div style="position:absolute;left:246.7px;top:232.0px;width:1.0px;height:17.0px;background:#ececec;"></div>
<div style="position:absolute;left:313.3px;top:232.0px;width:1.0px;height:17.0px;background:#ececec;"></div>
<div style="position:absolute;left:440.0px;top:232.0px;width:1.0px;height:17.0px;background:#ececec;"></div>
<div style="position:absolute;left:542.5px;top:232.0px;width:1.0px;height:17.0px;background:#ececec;"></div>
<div style="position:absolute;left:609.0px;top:232.0px;width:1.0px;height:17.0px;background:#ececec;"></div>
<div style="position:absolute;left:716.2px;top:232.0px;width:1.0px;height:17.0px;background:#ececec;"></div>
<div style="position:absolute;left:800.8px;top:232.0px;width:1.0px;height:17.0px;background:#ececec;"></div>
<div style="position:absolute;left:883.5px;top:232.0px;width:1.0px;height:17.0px;background:#ececec;"></div>
<div style="position:absolute;left:967.5px;top:232.0px;width:1.0px;height:17.0px;background:#ececec;"></div>
<div style="position:absolute;left:1051.1px;top:232.0px;width:1.0px;height:17.0px;background:#ececec;"></div>
<div style="position:absolute;left:1168.1px;top:232.0px;width:1.0px;height:17.0px;background:#ececec;"></div>
<svg style="position:absolute;left:11.6px;top:233.5px;" width="14" height="14" viewBox="0 0 14 14"><path d="M13.5 0.5v13h-13z" fill="#dedede"/></svg>
<div class="t" style="left:77.35px;top:235.14px;font-size:12.86px;font-weight:400;color:#555;transform:scaleX(0.9751);">A</div>
<div class="t" style="left:188.50px;top:235.14px;font-size:12.86px;font-weight:400;color:#555;transform:scaleX(0.7953);">B</div>
<div class="t" style="left:276.65px;top:235.14px;font-size:12.86px;font-weight:400;color:#555;transform:scaleX(0.8318);">C</div>
<div class="t" style="left:373.25px;top:235.14px;font-size:12.86px;font-weight:400;color:#555;transform:scaleX(0.8426);">D</div>
<div class="t" style="left:488.60px;top:235.14px;font-size:12.86px;font-weight:400;color:#555;transform:scaleX(0.7368);">E</div>
<div class="t" style="left:573.25px;top:235.14px;font-size:12.86px;font-weight:400;color:#555;transform:scaleX(0.7650);">F</div>
<div class="t" style="left:659.10px;top:235.14px;font-size:12.86px;font-weight:400;color:#555;transform:scaleX(0.7977);">G</div>
<div class="t" style="left:755.00px;top:235.14px;font-size:12.86px;font-weight:400;color:#555;transform:scaleX(0.8642);">H</div>
<div class="t" style="left:841.35px;top:235.14px;font-size:12.86px;font-weight:400;color:#555;transform:scaleX(0.7222);">I</div>
<div class="t" style="left:923.20px;top:235.14px;font-size:12.86px;font-weight:400;color:#3f7a57;transform:scaleX(0.8711);">J</div>
<div class="t" style="left:1006.00px;top:235.14px;font-size:12.86px;font-weight:400;color:#555;transform:scaleX(0.8889);">K</div>
<div class="t" style="left:1107.10px;top:235.14px;font-size:12.86px;font-weight:400;color:#555;transform:scaleX(0.8408);">L</div>
<div class="t" style="left:1195.75px;top:235.14px;font-size:12.86px;font-weight:400;color:#555;transform:scaleX(0.8849);">M</div>
<div style="position:absolute;left:1.5px;top:250.0px;width:25.0px;height:525.6px;background:#ffffff;"></div>
<div style="position:absolute;left:1.5px;top:418.0px;width:25.0px;height:27.5px;background:#dcdcdc;"></div>
<div style="position:absolute;left:25.5px;top:418.0px;width:2.0px;height:27.5px;background:#4f8a66;"></div>
<div style="position:absolute;left:26.0px;top:250.0px;width:1.0px;height:525.6px;background:#dedede;"></div>
<div style="position:absolute;left:2.0px;top:288.5px;width:24.0px;height:1.0px;background:#f1f1f1;"></div>
<div style="position:absolute;left:2.0px;top:307.5px;width:24.0px;height:1.0px;background:#f1f1f1;"></div>
<div style="position:absolute;left:2.0px;top:335.0px;width:24.0px;height:1.0px;background:#f1f1f1;"></div>
<div style="position:absolute;left:2.0px;top:362.5px;width:24.0px;height:1.0px;background:#f1f1f1;"></div>
<div style="position:absolute;left:2.0px;top:390.0px;width:24.0px;height:1.0px;background:#f1f1f1;"></div>
<div style="position:absolute;left:2.0px;top:417.5px;width:24.0px;height:1.0px;background:#f1f1f1;"></div>
<div style="position:absolute;left:2.0px;top:445.0px;width:24.0px;height:1.0px;background:#f1f1f1;"></div>
<div style="position:absolute;left:2.0px;top:472.5px;width:24.0px;height:1.0px;background:#f1f1f1;"></div>
<div style="position:absolute;left:2.0px;top:500.0px;width:24.0px;height:1.0px;background:#f1f1f1;"></div>
<div style="position:absolute;left:2.0px;top:518.5px;width:24.0px;height:1.0px;background:#f1f1f1;"></div>
<div style="position:absolute;left:2.0px;top:537.0px;width:24.0px;height:1.0px;background:#f1f1f1;"></div>
<div style="position:absolute;left:2.0px;top:555.5px;width:24.0px;height:1.0px;background:#f1f1f1;"></div>
<div style="position:absolute;left:2.0px;top:574.0px;width:24.0px;height:1.0px;background:#f1f1f1;"></div>
<div style="position:absolute;left:2.0px;top:592.5px;width:24.0px;height:1.0px;background:#f1f1f1;"></div>
<div style="position:absolute;left:2.0px;top:611.0px;width:24.0px;height:1.0px;background:#f1f1f1;"></div>
<div style="position:absolute;left:2.0px;top:629.5px;width:24.0px;height:1.0px;background:#f1f1f1;"></div>
<div style="position:absolute;left:2.0px;top:648.0px;width:24.0px;height:1.0px;background:#f1f1f1;"></div>
<div style="position:absolute;left:2.0px;top:666.5px;width:24.0px;height:1.0px;background:#f1f1f1;"></div>
<div style="position:absolute;left:2.0px;top:685.0px;width:24.0px;height:1.0px;background:#f1f1f1;"></div>
<div style="position:absolute;left:2.0px;top:703.5px;width:24.0px;height:1.0px;background:#f1f1f1;"></div>
<div style="position:absolute;left:2.0px;top:722.0px;width:24.0px;height:1.0px;background:#f1f1f1;"></div>
<div style="position:absolute;left:2.0px;top:740.5px;width:24.0px;height:1.0px;background:#f1f1f1;"></div>
<div style="position:absolute;left:2.0px;top:759.0px;width:24.0px;height:1.0px;background:#f1f1f1;"></div>
<div style="position:absolute;left:2.0px;top:777.5px;width:24.0px;height:1.0px;background:#f1f1f1;"></div>
<div class="t" style="left:11.90px;top:269.84px;font-size:12.86px;font-weight:400;color:#505050;transform:scaleX(0.7287);">1</div>
<div class="t" style="left:11.00px;top:292.84px;font-size:12.86px;font-weight:400;color:#505050;transform:scaleX(0.9810);">2</div>
<div class="t" style="left:11.00px;top:317.84px;font-size:12.86px;font-weight:400;color:#505050;transform:scaleX(0.9810);">3</div>
<div class="t" style="left:11.00px;top:345.34px;font-size:12.86px;font-weight:400;color:#505050;transform:scaleX(0.9810);">4</div>
<div class="t" style="left:11.00px;top:372.84px;font-size:12.86px;font-weight:400;color:#505050;transform:scaleX(0.9810);">5</div>
<div class="t" style="left:11.00px;top:400.34px;font-size:12.86px;font-weight:400;color:#505050;transform:scaleX(0.9810);">6</div>
<div class="t" style="left:11.00px;top:427.84px;font-size:12.86px;font-weight:400;color:#444;transform:scaleX(0.9810);">7</div>
<div class="t" style="left:11.00px;top:455.34px;font-size:12.86px;font-weight:400;color:#505050;transform:scaleX(0.9810);">8</div>
<div class="t" style="left:11.00px;top:482.84px;font-size:12.86px;font-weight:400;color:#505050;transform:scaleX(0.9810);">9</div>
<div class="t" style="left:7.70px;top:503.47px;font-size:13.29px;font-weight:400;color:#505050;transform:scaleX(0.9222);">10</div>
<div class="t" style="left:8.35px;top:521.97px;font-size:13.29px;font-weight:400;color:#505050;transform:scaleX(0.8902);">11</div>
<div class="t" style="left:7.70px;top:540.47px;font-size:13.29px;font-weight:400;color:#505050;transform:scaleX(0.9222);">12</div>
<div class="t" style="left:7.70px;top:558.97px;font-size:13.29px;font-weight:400;color:#505050;transform:scaleX(0.9222);">13</div>
<div class="t" style="left:7.70px;top:577.47px;font-size:13.29px;font-weight:400;color:#505050;transform:scaleX(0.9222);">14</div>
<div class="t" style="left:7.70px;top:595.97px;font-size:13.29px;font-weight:400;color:#505050;transform:scaleX(0.9222);">15</div>
<div class="t" style="left:7.70px;top:614.47px;font-size:13.29px;font-weight:400;color:#505050;transform:scaleX(0.9222);">16</div>
<div class="t" style="left:7.70px;top:632.97px;font-size:13.29px;font-weight:400;color:#505050;transform:scaleX(0.9222);">17</div>
<div class="t" style="left:7.70px;top:651.47px;font-size:13.29px;font-weight:400;color:#505050;transform:scaleX(0.9222);">18</div>
<div class="t" style="left:7.70px;top:669.97px;font-size:13.29px;font-weight:400;color:#505050;transform:scaleX(0.9222);">19</div>
<div class="t" style="left:7.70px;top:688.47px;font-size:13.29px;font-weight:400;color:#505050;transform:scaleX(0.9222);">20</div>
<div class="t" style="left:7.70px;top:706.97px;font-size:13.29px;font-weight:400;color:#505050;transform:scaleX(0.9222);">21</div>
<div class="t" style="left:7.70px;top:725.47px;font-size:13.29px;font-weight:400;color:#505050;transform:scaleX(0.9222);">22</div>
<div class="t" style="left:7.70px;top:743.97px;font-size:13.29px;font-weight:400;color:#505050;transform:scaleX(0.9222);">23</div>
<div class="t" style="left:7.70px;top:762.47px;font-size:13.29px;font-weight:400;color:#505050;transform:scaleX(0.9222);">24</div>
<div class="t" style="left:499.70px;top:257.16px;font-size:27.97px;font-weight:700;color:#111;transform:scaleX(0.9434);">Sales Summary</div>
<div style="position:absolute;left:27.3px;top:308.0px;width:220.6px;height:27.3px;background:#548235;"></div>
<div class="t" style="left:31.40px;top:312.91px;font-size:19.16px;font-weight:400;color:#e6f0de;transform:scaleX(0.9351);">Region</div>
<div style="position:absolute;box-sizing:border-box;left:118.2px;top:318.6px;width:16.6px;height:15.4px;border:1px solid #b9b9b9;background:#fbfbfb;"></div>
<div style="position:absolute;left:123.5px;top:325.5px;width:0;height:0;border-left:3px solid transparent;border-right:3px solid transparent;border-top:3px solid #777"></div>
<div class="t" style="left:195.50px;top:312.91px;font-size:19.16px;font-weight:400;color:#e6f0de;transform:scaleX(0.9018);">Sales</div>
<div class="t" style="left:31.40px;top:340.51px;font-size:19.16px;font-weight:400;color:#1a1a1a;transform:scaleX(0.8977);">East</div>
<div class="t" style="left:174.70px;top:340.51px;font-size:19.16px;font-weight:400;color:#1a1a1a;transform:scaleX(0.9846);">$23,507</div>
<div class="t" style="left:31.40px;top:368.01px;font-size:19.16px;font-weight:400;color:#1a1a1a;transform:scaleX(1.0331);">North</div>
<div class="t" style="left:174.70px;top:368.01px;font-size:19.16px;font-weight:400;color:#1a1a1a;transform:scaleX(0.9846);">$25,518</div>
<div class="t" style="left:31.40px;top:395.51px;font-size:19.16px;font-weight:400;color:#1a1a1a;transform:scaleX(0.9719);">South</div>
<div class="t" style="left:174.70px;top:395.51px;font-size:19.16px;font-weight:400;color:#1a1a1a;transform:scaleX(0.9846);">$26,503</div>
<div class="t" style="left:31.40px;top:423.01px;font-size:19.16px;font-weight:400;color:#1a1a1a;transform:scaleX(0.9976);">West</div>
<div class="t" style="left:174.70px;top:423.01px;font-size:19.16px;font-weight:400;color:#1a1a1a;transform:scaleX(0.9846);">$25,987</div>
<div style="position:absolute;left:27.3px;top:362.5px;width:220.6px;height:1.0px;background:#f0f0f0;"></div>
<div style="position:absolute;left:27.3px;top:390.0px;width:220.6px;height:1.0px;background:#f0f0f0;"></div>
<div style="position:absolute;left:27.3px;top:417.5px;width:220.6px;height:1.0px;background:#f0f0f0;"></div>
<div style="position:absolute;left:27.3px;top:444.0px;width:220.6px;height:1.5px;background:#a9c79a;"></div>
<div class="t" style="left:31.40px;top:449.31px;font-size:19.16px;font-weight:700;color:#111;transform:scaleX(0.9504);">Grand Total</div>
<div class="t" style="left:164.30px;top:449.31px;font-size:19.16px;font-weight:700;color:#111;transform:scaleX(0.9837);">$101,515</div>
<div style="position:absolute;left:314.1px;top:307.3px;width:229.8px;height:28.0px;background:#ed7d31;"></div>
<div class="t" style="left:318.20px;top:312.91px;font-size:19.16px;font-weight:700;color:#ffffff;transform:scaleX(0.9876);">Week</div>
<div style="position:absolute;box-sizing:border-box;left:424.0px;top:318.6px;width:16.0px;height:15.4px;border:1px solid #b9b9b9;background:#fbfbfb;"></div>
<div style="position:absolute;left:429.0px;top:325.5px;width:0;height:0;border-left:3px solid transparent;border-right:3px solid transparent;border-top:3px solid #777"></div>
<div class="t" style="left:490.80px;top:312.91px;font-size:19.16px;font-weight:700;color:#ffffff;transform:scaleX(0.8761);">Sales</div>
<div style="position:absolute;left:314.1px;top:444.5px;width:229.8px;height:1.3px;background:#f3c7a8;"></div>
<div style="position:absolute;left:314.1px;top:471.5px;width:229.8px;height:1.5px;background:#f3c7a8;"></div>
<div class="t" style="left:318.20px;top:340.51px;font-size:19.16px;font-weight:400;color:#1a1a1a;transform:scaleX(0.9679);">Week 1</div>
<div class="t" style="left:471.10px;top:340.51px;font-size:19.16px;font-weight:400;color:#1a1a1a;transform:scaleX(0.9846);">$25,869</div>
<div class="t" style="left:318.20px;top:368.01px;font-size:19.16px;font-weight:400;color:#1a1a1a;transform:scaleX(0.9679);">Week 2</div>
<div class="t" style="left:471.10px;top:368.01px;font-size:19.16px;font-weight:400;color:#1a1a1a;transform:scaleX(0.9846);">$25,859</div>
<div class="t" style="left:318.20px;top:395.51px;font-size:19.16px;font-weight:400;color:#1a1a1a;transform:scaleX(0.9679);">Week 3</div>
<div class="t" style="left:471.10px;top:395.51px;font-size:19.16px;font-weight:400;color:#1a1a1a;transform:scaleX(0.9846);">$22,220</div>
<div class="t" style="left:318.20px;top:423.01px;font-size:19.16px;font-weight:400;color:#1a1a1a;transform:scaleX(0.9679);">Week 4</div>
<div class="t" style="left:471.10px;top:423.01px;font-size:19.16px;font-weight:400;color:#1a1a1a;transform:scaleX(0.9846);">$27,567</div>
<div class="t" style="left:318.20px;top:449.31px;font-size:19.16px;font-weight:700;color:#111;transform:scaleX(0.9504);">Grand Total</div>
<div class="t" style="left:460.70px;top:449.31px;font-size:19.16px;font-weight:700;color:#111;transform:scaleX(0.9837);">$101,515</div>
<div style="position:absolute;left:609.6px;top:307.7px;width:558.6px;height:54.8px;background:#404040;"></div>
<div style="position:absolute;left:609.6px;top:362.5px;width:558.6px;height:110.2px;background:#fce4d6;"></div>
<div style="position:absolute;left:609.6px;top:472.7px;width:558.6px;height:27.0px;background:#404040;"></div>
<div style="position:absolute;left:609.6px;top:362.5px;width:1.0px;height:110.2px;background:#c9b8ad;"></div>
<div class="t" style="left:613.50px;top:313.01px;font-size:19.16px;font-weight:700;color:#fff;transform:scaleX(0.8761);">Sales</div>
<div class="t" style="left:720.80px;top:313.01px;font-size:19.16px;font-weight:700;color:#fff;transform:scaleX(0.9876);">Week</div>
<div style="position:absolute;box-sizing:border-box;left:783.7px;top:318.3px;width:16.7px;height:16.3px;border:1px solid #d0d0d0;background:#fbfbfb;"></div>
<div style="position:absolute;left:789.0px;top:325.5px;width:0;height:0;border-left:3px solid transparent;border-right:3px solid transparent;border-top:3px solid #777"></div>
<div class="t" style="left:613.50px;top:340.51px;font-size:19.16px;font-weight:700;color:#fff;transform:scaleX(0.9114);">Region</div>
<div style="position:absolute;box-sizing:border-box;left:700.4px;top:345.8px;width:16.0px;height:15.7px;border:1px solid #d0d0d0;background:#fbfbfb;"></div>
<div style="position:absolute;left:705.4px;top:352.5px;width:0;height:0;border-left:3px solid transparent;border-right:3px solid transparent;border-top:3px solid #777"></div>
<div class="t" style="left:731.70px;top:340.51px;font-size:19.16px;font-weight:700;color:#fff;transform:scaleX(0.9890);">Week 1</div>
<div class="t" style="left:815.00px;top:340.51px;font-size:19.16px;font-weight:700;color:#fff;transform:scaleX(0.9890);">Week 2</div>
<div class="t" style="left:899.30px;top:340.51px;font-size:19.16px;font-weight:700;color:#fff;transform:scaleX(0.9890);">Week 3</div>
<div class="t" style="left:982.80px;top:340.51px;font-size:19.16px;font-weight:700;color:#fff;transform:scaleX(0.9890);">Week 4</div>
<div class="t" style="left:1063.40px;top:340.51px;font-size:19.16px;font-weight:700;color:#fff;transform:scaleX(0.9504);">Grand Total</div>
<div class="t" style="left:614.40px;top:368.01px;font-size:19.16px;font-weight:400;color:#221a16;transform:scaleX(0.8977);">East</div>
<div class="t" style="left:738.90px;top:368.01px;font-size:19.16px;font-weight:400;color:#221a16;transform:scaleX(0.9858);">$7,463</div>
<div class="t" style="left:822.20px;top:368.01px;font-size:19.16px;font-weight:400;color:#221a16;transform:scaleX(0.9858);">$6,673</div>
<div class="t" style="left:906.50px;top:368.01px;font-size:19.16px;font-weight:400;color:#221a16;transform:scaleX(0.9858);">$4,788</div>
<div class="t" style="left:990.00px;top:368.01px;font-size:19.16px;font-weight:400;color:#221a16;transform:scaleX(0.9858);">$4,583</div>
<div class="t" style="left:1096.00px;top:368.01px;font-size:19.16px;font-weight:400;color:#221a16;transform:scaleX(0.9846);">$23,507</div>
<div class="t" style="left:614.40px;top:395.51px;font-size:19.16px;font-weight:400;color:#221a16;transform:scaleX(1.0331);">North</div>
<div class="t" style="left:738.90px;top:395.51px;font-size:19.16px;font-weight:400;color:#221a16;transform:scaleX(0.9858);">$6,447</div>
<div class="t" style="left:822.20px;top:395.51px;font-size:19.16px;font-weight:400;color:#221a16;transform:scaleX(0.9858);">$6,247</div>
<div class="t" style="left:906.50px;top:395.51px;font-size:19.16px;font-weight:400;color:#221a16;transform:scaleX(0.9858);">$5,764</div>
<div class="t" style="left:990.00px;top:395.51px;font-size:19.16px;font-weight:400;color:#221a16;transform:scaleX(0.9858);">$7,060</div>
<div class="t" style="left:1096.00px;top:395.51px;font-size:19.16px;font-weight:400;color:#221a16;transform:scaleX(0.9846);">$25,518</div>
<div class="t" style="left:614.40px;top:423.01px;font-size:19.16px;font-weight:400;color:#221a16;transform:scaleX(0.9719);">South</div>
<div class="t" style="left:738.90px;top:423.01px;font-size:19.16px;font-weight:400;color:#221a16;transform:scaleX(0.9858);">$6,275</div>
<div class="t" style="left:822.20px;top:423.01px;font-size:19.16px;font-weight:400;color:#221a16;transform:scaleX(0.9858);">$7,921</div>
<div class="t" style="left:906.50px;top:423.01px;font-size:19.16px;font-weight:400;color:#221a16;transform:scaleX(0.9858);">$6,383</div>
<div class="t" style="left:990.00px;top:423.01px;font-size:19.16px;font-weight:400;color:#221a16;transform:scaleX(0.9858);">$5,924</div>
<div class="t" style="left:1096.00px;top:423.01px;font-size:19.16px;font-weight:400;color:#221a16;transform:scaleX(0.9846);">$26,503</div>
<div class="t" style="left:614.40px;top:450.51px;font-size:19.16px;font-weight:400;color:#221a16;transform:scaleX(0.9976);">West</div>
<div class="t" style="left:738.90px;top:450.51px;font-size:19.16px;font-weight:400;color:#221a16;transform:scaleX(0.9858);">$5,684</div>
<div class="t" style="left:822.20px;top:450.51px;font-size:19.16px;font-weight:400;color:#221a16;transform:scaleX(0.9858);">$5,018</div>
<div class="t" style="left:906.50px;top:450.51px;font-size:19.16px;font-weight:400;color:#221a16;transform:scaleX(0.9858);">$5,285</div>
<div class="t" style="left:979.60px;top:450.51px;font-size:19.16px;font-weight:400;color:#221a16;transform:scaleX(0.9846);">$10,000</div>
<div class="t" style="left:1096.00px;top:450.51px;font-size:19.16px;font-weight:400;color:#221a16;transform:scaleX(0.9846);">$25,987</div>
<div class="t" style="left:613.90px;top:477.71px;font-size:19.16px;font-weight:700;color:#fff;transform:scaleX(0.9504);">Grand Total</div>
<div class="t" style="left:728.00px;top:477.71px;font-size:19.16px;font-weight:700;color:#fff;transform:scaleX(0.9918);">$25,869</div>
<div class="t" style="left:811.30px;top:477.71px;font-size:19.16px;font-weight:700;color:#fff;transform:scaleX(0.9918);">$25,859</div>
<div class="t" style="left:895.60px;top:477.71px;font-size:19.16px;font-weight:700;color:#fff;transform:scaleX(0.9918);">$22,220</div>
<div class="t" style="left:979.10px;top:477.71px;font-size:19.16px;font-weight:700;color:#fff;transform:scaleX(0.9918);">$27,567</div>
<div class="t" style="left:1085.60px;top:477.71px;font-size:19.16px;font-weight:700;color:#fff;transform:scaleX(0.9837);">$101,515</div>
<div style="position:absolute;box-sizing:border-box;left:883.2px;top:417.3px;width:85.6px;height:28.9px;border:1.6px solid #217346;background:transparent;"></div>
<div style="position:absolute;left:966.5px;top:444.0px;width:3.5px;height:3.5px;background:#217346;"></div>
<div style="position:absolute;box-sizing:border-box;left:606.3px;top:540.3px;width:552.7px;height:259.7px;border:1px solid #d9d9d9;background:#fff;"></div>
<div style="position:absolute;left:652.9px;top:554.2px;width:1.0px;height:221.8px;background:#d9d9d9;"></div>
<div style="position:absolute;left:720.6px;top:554.2px;width:1.0px;height:221.8px;background:#d9d9d9;"></div>
<div style="position:absolute;left:788.4px;top:554.2px;width:1.0px;height:221.8px;background:#d9d9d9;"></div>
<div style="position:absolute;left:856.1px;top:554.2px;width:1.0px;height:221.8px;background:#d9d9d9;"></div>
<div style="position:absolute;left:923.9px;top:554.2px;width:1.0px;height:221.8px;background:#d9d9d9;"></div>
<div style="position:absolute;left:991.6px;top:554.2px;width:1.0px;height:221.8px;background:#d9d9d9;"></div>
<div style="position:absolute;left:1059.4px;top:554.2px;width:1.0px;height:221.8px;background:#d9d9d9;"></div>
<div style="position:absolute;left:653.4px;top:571.3px;width:352.1px;height:22.0px;background:#ffc000;"></div>
<div style="position:absolute;left:653.4px;top:571.3px;width:216.6px;height:22.0px;background:#a5a5a5;"></div>
<div style="position:absolute;left:653.4px;top:571.3px;width:145.0px;height:22.0px;background:#ed7d31;"></div>
<div style="position:absolute;left:653.4px;top:571.3px;width:77.0px;height:22.0px;background:#4472c4;"></div>
<div class="t" style="left:617.50px;top:576.75px;font-size:10.71px;font-weight:400;color:#595959;transform:scaleX(1.0118);">West</div>
<div style="position:absolute;left:653.4px;top:627.4px;width:359.1px;height:22.0px;background:#ffc000;"></div>
<div style="position:absolute;left:653.4px;top:627.4px;width:278.8px;height:22.0px;background:#a5a5a5;"></div>
<div style="position:absolute;left:653.4px;top:627.4px;width:192.4px;height:22.0px;background:#ed7d31;"></div>
<div style="position:absolute;left:653.4px;top:627.4px;width:85.0px;height:22.0px;background:#4472c4;"></div>
<div class="t" style="left:614.20px;top:632.85px;font-size:10.71px;font-weight:400;color:#595959;transform:scaleX(0.9922);">South</div>
<div style="position:absolute;left:653.4px;top:683.5px;width:345.8px;height:22.0px;background:#ffc000;"></div>
<div style="position:absolute;left:653.4px;top:683.5px;width:250.1px;height:22.0px;background:#a5a5a5;"></div>
<div style="position:absolute;left:653.4px;top:683.5px;width:172.0px;height:22.0px;background:#ed7d31;"></div>
<div style="position:absolute;left:653.4px;top:683.5px;width:87.4px;height:22.0px;background:#4472c4;"></div>
<div class="t" style="left:615.00px;top:688.95px;font-size:10.71px;font-weight:400;color:#595959;transform:scaleX(1.0307);">North</div>
<div style="position:absolute;left:653.4px;top:739.3px;width:318.5px;height:22.0px;background:#ffc000;"></div>
<div style="position:absolute;left:653.4px;top:739.3px;width:256.4px;height:22.0px;background:#a5a5a5;"></div>
<div style="position:absolute;left:653.4px;top:739.3px;width:191.5px;height:22.0px;background:#ed7d31;"></div>
<div style="position:absolute;left:653.4px;top:739.3px;width:101.1px;height:22.0px;background:#4472c4;"></div>
<div class="t" style="left:623.00px;top:744.75px;font-size:10.71px;font-weight:400;color:#595959;transform:scaleX(0.8867);">East</div>
<div style="position:absolute;left:1100.0px;top:638.0px;width:6.4px;height:6.4px;background:#4472c4;"></div>
<div class="t" style="left:1109.20px;top:635.04px;font-size:12.14px;font-weight:400;color:#595959;transform:scaleX(0.8675);">Week 1</div>
<div style="position:absolute;left:1100.0px;top:659.8px;width:6.4px;height:6.4px;background:#ed7d31;"></div>
<div class="t" style="left:1109.20px;top:656.84px;font-size:12.14px;font-weight:400;color:#595959;transform:scaleX(0.8675);">Week 2</div>
<div style="position:absolute;left:1100.0px;top:682.0px;width:6.4px;height:6.4px;background:#a5a5a5;"></div>
<div class="t" style="left:1109.20px;top:679.04px;font-size:12.14px;font-weight:400;color:#595959;transform:scaleX(0.8675);">Week 3</div>
<div style="position:absolute;left:1100.0px;top:703.8px;width:6.4px;height:6.4px;background:#ffc000;"></div>
<div class="t" style="left:1109.20px;top:700.84px;font-size:12.14px;font-weight:400;color:#595959;transform:scaleX(0.8675);">Week 4</div>
<div style="position:absolute;left:1205.4px;top:249.5px;width:1.0px;height:526.5px;background:#d4d4d4;"></div>
<div style="position:absolute;left:1206.4px;top:231.0px;width:16.4px;height:545.0px;background:#f4f4f4;"></div>
<div style="position:absolute;box-sizing:border-box;left:1207.0px;top:232.0px;width:15.8px;height:15.8px;border:1px solid #dedede;background:#fff;"></div>
<div style="position:absolute;left:1211.3px;top:238.2px;width:0;height:0;border-left:3.5px solid transparent;border-right:3.5px solid transparent;border-bottom:3.5px solid #555"></div>
<div style="position:absolute;box-sizing:border-box;left:1207.0px;top:247.8px;width:15.8px;height:457.2px;border:1px solid #e0e0e0;background:#fff;"></div>
<div style="position:absolute;box-sizing:border-box;left:1207.0px;top:761.5px;width:15.8px;height:14.5px;border:1px solid #dedede;background:#fff;"></div>
<div style="position:absolute;left:1211.3px;top:767.2px;width:0;height:0;border-left:3.5px solid transparent;border-right:3.5px solid transparent;border-top:3.5px solid #555"></div>
<div style="position:absolute;left:1.5px;top:775.6px;width:1221.3px;height:15.4px;background:#f3f3f3;"></div>
<div style="position:absolute;left:1.5px;top:775.6px;width:1221.3px;height:1.0px;background:#dadada;"></div>
<svg style="position:absolute;left:17px;top:783px;" width="5" height="8" viewBox="0 0 5 8"><path d="M4.5 0.5l-4 3.5 4 3.5" fill="none" stroke="#bbb" stroke-width="1.2"/></svg>
<svg style="position:absolute;left:38px;top:783px;" width="5" height="8" viewBox="0 0 5 8"><path d="M0.5 0.5l4 3.5-4 3.5" fill="none" stroke="#bbb" stroke-width="1.2"/></svg>
<div style="position:absolute;left:71.5px;top:776.6px;width:1.0px;height:14.4px;background:#cfcfcf;"></div>
<div class="t" style="left:80.80px;top:779.50px;font-size:12.43px;font-weight:400;color:#444;transform:scaleX(0.9868);">Raw Data</div>
<div style="position:absolute;left:144.2px;top:776.6px;width:70.3px;height:14.4px;background:#ffffff;"></div>
<div style="position:absolute;left:144.2px;top:776.6px;width:1.0px;height:14.4px;background:#cfcfcf;"></div>
<div style="position:absolute;left:214.5px;top:776.6px;width:1.0px;height:14.4px;background:#cfcfcf;"></div>
<div class="t" style="left:150.00px;top:779.50px;font-size:12.43px;font-weight:700;color:#3b7a57;transform:scaleX(1.0463);">Summary</div>
<svg style="position:absolute;left:239.5px;top:778.5px;" width="16" height="16" viewBox="0 0 16 16"><circle cx="8" cy="8" r="7.2" fill="none" stroke="#666" stroke-width="1.3"/><path d="M8 4v8M4 8h8" stroke="#666" stroke-width="1.4"/></svg>
<div style="position:absolute;left:733.0px;top:781.0px;width:1.2px;height:1.2px;background:#888;"></div>
<div style="position:absolute;left:733.0px;top:784.5px;width:1.2px;height:1.2px;background:#888;"></div>
<div style="position:absolute;left:733.0px;top:788.0px;width:1.2px;height:1.2px;background:#888;"></div>
<div style="position:absolute;box-sizing:border-box;left:745.0px;top:777.5px;width:465.0px;height:13.5px;border:1px solid #dcdcdc;background:#fff;"></div>
<svg style="position:absolute;left:750.5px;top:781.5px;" width="5" height="8" viewBox="0 0 5 8"><path d="M4.5 0v8l-4.5-4z" fill="#666"/></svg>
<div style="position:absolute;left:1159.0px;top:778.0px;width:31.0px;height:13.0px;background:#ececec;"></div>
<div style="position:absolute;box-sizing:border-box;left:761.7px;top:777.5px;width:397.3px;height:13.5px;border:1px solid #d0d0d0;background:#fff;"></div>
<div style="position:absolute;box-sizing:border-box;left:1190.0px;top:777.5px;width:16.0px;height:13.5px;border:1px solid #dedede;background:#fff;"></div>
<svg style="position:absolute;left:1195.5px;top:781.5px;" width="5" height="8" viewBox="0 0 5 8"><path d="M0 0v8l4.5-4z" fill="#666"/></svg>
<svg style="position:absolute;left:178px;top:783.5px;" width="10" height="14" viewBox="0 0 10 14"><path d="M0.8 0.8v11.5l2.8-2.6 2 4.2 1.8-.9-2-4.1h3.8z" fill="#111" stroke="#fff" stroke-width="0.9"/></svg>
<div style="position:absolute;left:1222.8px;top:231.0px;width:336.2px;height:560.0px;background:#ffffff;"></div>
<div style="position:absolute;left:1222.3px;top:231.0px;width:3.4px;height:560.0px;background:#efefef;"></div>
<div class="t" style="left:1234.90px;top:239.77px;font-size:22.29px;font-weight:400;color:#4c8a6a;transform:scaleX(0.8891);">PivotTable Fields</div>
<div style="position:absolute;left:1504.5px;top:248.4px;width:0;height:0;border-left:3.2px solid transparent;border-right:3.2px solid transparent;border-top:3.2px solid #555"></div>
<svg style="position:absolute;left:1544px;top:246.6px;" width="7.5" height="7.5" viewBox="0 0 7.5 7.5"><path d="M0.7 0.7l6.1 6.1M6.8 0.7l-6.1 6.1" stroke="#555" stroke-width="1.4"/></svg>
<div class="t" style="left:1235.30px;top:274.22px;font-size:12.29px;font-weight:400;color:#555;transform:scaleX(0.9704);">Choose fields to add to report:</div>
<div style="position:absolute;box-sizing:border-box;left:1525.2px;top:268.9px;width:44.8px;height:20.7px;border:1px solid #e0e0e0;background:#fff;"></div>
<svg style="position:absolute;left:1529px;top:272px;" width="16" height="16" viewBox="0 0 16 16"><path d="M8 1.2l1.7 2.4 2.9-.4.4 2.9 2.4 1.7-1.7 2.4.4 2.9-2.9.4-1.7 2.4-2.4-1.7-2.9-.4-.4-2.9-2.4-1.7 1.7-2.4-.4-2.9 2.9.4z" fill="none" stroke="#555" stroke-width="1.2"/><circle cx="8" cy="8" r="2.2" fill="none" stroke="#555" stroke-width="1.2"/></svg>
<div style="position:absolute;left:1550.0px;top:278.0px;width:0;height:0;border-left:3px solid transparent;border-right:3px solid transparent;border-top:3px solid #555"></div>
<div style="position:absolute;box-sizing:border-box;left:1234.4px;top:299.5px;width:335.6px;height:18.0px;border:1px solid #d6d6d6;background:#fff;"></div>
<div class="t" style="left:1236.00px;top:302.06px;font-size:12.00px;font-weight:400;color:#9a9a9a;transform:scaleX(0.8938);">Search</div>
<svg style="position:absolute;left:1544px;top:300px;" width="16" height="16" viewBox="0 0 16 16"><circle cx="10" cy="6" r="5" fill="none" stroke="#555" stroke-width="1.3"/><path d="M6.4 9.6l-5.8 5.8" stroke="#555" stroke-width="1.4"/></svg>
<div style="position:absolute;left:1234.0px;top:325.0px;width:325.0px;height:204.0px;background:#fafafa;"></div>
<div style="position:absolute;left:1234.0px;top:528.7px;width:325.0px;height:1.0px;background:#e6e6e6;"></div>
<div style="position:absolute;box-sizing:border-box;left:1235.2px;top:330.7px;width:13.6px;height:13.2px;border:1px solid #aaaaaa;background:#fff;"></div>
<svg style="position:absolute;left:1237.5px;top:333.2px;" width="9" height="8" viewBox="0 0 9 8"><path d="M0.7 3.8l2.5 3 5.3-6.3" fill="none" stroke="#555" stroke-width="1.2"/></svg>
<div class="t" style="left:1251.90px;top:333.61px;font-size:11.11px;font-weight:700;color:#444;transform:scaleX(1.0274);">Region</div>
<div style="position:absolute;box-sizing:border-box;left:1235.2px;top:350.4px;width:13.6px;height:13.2px;border:1px solid #aaaaaa;background:#fff;"></div>
<svg style="position:absolute;left:1237.5px;top:352.9px;" width="9" height="8" viewBox="0 0 9 8"><path d="M0.7 3.8l2.5 3 5.3-6.3" fill="none" stroke="#555" stroke-width="1.2"/></svg>
<div class="t" style="left:1251.90px;top:353.31px;font-size:11.11px;font-weight:700;color:#444;transform:scaleX(1.0419);">Week</div>
<div style="position:absolute;box-sizing:border-box;left:1235.2px;top:370.0px;width:13.6px;height:13.2px;border:1px solid #aaaaaa;background:#fff;"></div>
<svg style="position:absolute;left:1237.5px;top:372.5px;" width="9" height="8" viewBox="0 0 9 8"><path d="M0.7 3.8l2.5 3 5.3-6.3" fill="none" stroke="#555" stroke-width="1.2"/></svg>
<div class="t" style="left:1251.90px;top:372.91px;font-size:11.11px;font-weight:700;color:#444;transform:scaleX(0.9293);">Sales</div>
<div class="t" style="left:1235.80px;top:395.74px;font-size:12.14px;font-weight:400;color:#666;transform:scaleX(0.9446);">More Tables...</div>
<div class="t" style="left:1237.00px;top:535.06px;font-size:11.29px;font-weight:400;color:#555;transform:scaleX(1.0320);">Drag fields between areas below:</div>
<div style="position:absolute;left:1236.0px;top:578.0px;width:162.0px;height:77.0px;background:#fafafa;"></div>
<div style="position:absolute;left:1400.0px;top:603.0px;width:159.0px;height:52.0px;background:#fafafa;"></div>
<div style="position:absolute;left:1236.0px;top:705.0px;width:159.0px;height:49.6px;background:#fafafa;"></div>
<div style="position:absolute;left:1400.0px;top:705.0px;width:159.0px;height:49.6px;background:#fafafa;"></div>
<div style="position:absolute;left:1398.0px;top:557.8px;width:1.0px;height:196.8px;background:#e2e2e2;"></div>
<div style="position:absolute;left:1236.2px;top:656.3px;width:322.8px;height:1.0px;background:#e2e2e2;"></div>
<svg style="position:absolute;left:1239.2px;top:560.8px;" width="11.5" height="11" viewBox="0 0 11.5 11"><path d="M0.5 0.5h10.5l-4 4.5v5.5h-2.5v-5.5z" fill="#777"/></svg>
<div class="t" style="left:1256.00px;top:561.22px;font-size:12.29px;font-weight:400;color:#555;transform:scaleX(0.8888);">Filters</div>
<svg style="position:absolute;left:1403.3px;top:561.8px;" width="9" height="9.5" viewBox="0 0 9 9.5"><path d="M1 0v9.5M4.5 0v9.5M7.8 0v9.5" stroke="#888" stroke-width="1.3"/><path d="M1 0v9.5" stroke="#666" stroke-width="1.8"/></svg>
<div class="t" style="left:1418.40px;top:561.50px;font-size:12.43px;font-weight:400;color:#555;transform:scaleX(0.9341);">Columns</div>
<div style="position:absolute;box-sizing:border-box;left:1400.3px;top:580.5px;width:169.7px;height:22.2px;border:1px solid #d6d6d6;background:#fff;"></div>
<div class="t" style="left:1407.20px;top:586.88px;font-size:11.86px;font-weight:400;color:#555;transform:scaleX(0.9411);">Week</div>
<div style="position:absolute;left:1543.3px;top:590.7px;width:0;height:0;border-left:3.2px solid transparent;border-right:3.2px solid transparent;border-top:3.2px solid #555"></div>
<svg style="position:absolute;left:1240px;top:663px;" width="10.5" height="9" viewBox="0 0 10.5 9"><path d="M0 1h10.5M0 4h10.5M0 7h10.5" stroke="#999" stroke-width="1.4"/></svg>
<div class="t" style="left:1255.30px;top:663.26px;font-size:12.00px;font-weight:400;color:#555;transform:scaleX(0.8900);">Rows</div>
<div class="t" style="left:1404.00px;top:662.14px;font-size:12.86px;font-weight:400;color:#777;transform:scaleX(1.0036);">Σ</div>
<div class="t" style="left:1418.40px;top:662.86px;font-size:12.00px;font-weight:400;color:#555;transform:scaleX(0.9492);">Values</div>
<div style="position:absolute;box-sizing:border-box;left:1236.2px;top:681.0px;width:158.5px;height:24.0px;border:1px solid #d6d6d6;background:#fff;"></div>
<div class="t" style="left:1244.40px;top:687.28px;font-size:11.86px;font-weight:400;color:#555;transform:scaleX(0.9498);">Region</div>
<div style="position:absolute;left:1377.6px;top:691.2px;width:0;height:0;border-left:3.2px solid transparent;border-right:3.2px solid transparent;border-top:3.2px solid #555"></div>
<div style="position:absolute;box-sizing:border-box;left:1400.3px;top:681.6px;width:169.7px;height:22.8px;border:1px solid #d6d6d6;background:#fff;"></div>
<div class="t" style="left:1407.20px;top:688.26px;font-size:12.00px;font-weight:400;color:#555;transform:scaleX(0.8600);">Sales</div>
<div style="position:absolute;left:1543.3px;top:691.4px;width:0;height:0;border-left:3.2px solid transparent;border-right:3.2px solid transparent;border-top:3.2px solid #555"></div>
<div style="position:absolute;box-sizing:border-box;left:1236.2px;top:773.7px;width:12.4px;height:12.9px;border:1px solid #b8b8b8;background:#fff;"></div>
<div class="t" style="left:1254.70px;top:774.74px;font-size:12.14px;font-weight:400;color:#555;transform:scaleX(0.9547);">Defer Layout Update</div>
<div style="position:absolute;box-sizing:border-box;left:1508.0px;top:768.0px;width:62.0px;height:27.0px;border:1px solid #ececec;background:#fcfcfc;"></div>
<div class="t" style="left:1517.00px;top:774.74px;font-size:12.14px;font-weight:400;color:#b4b4b4;transform:scaleX(0.9193);">Update</div>
</div></body></html>
